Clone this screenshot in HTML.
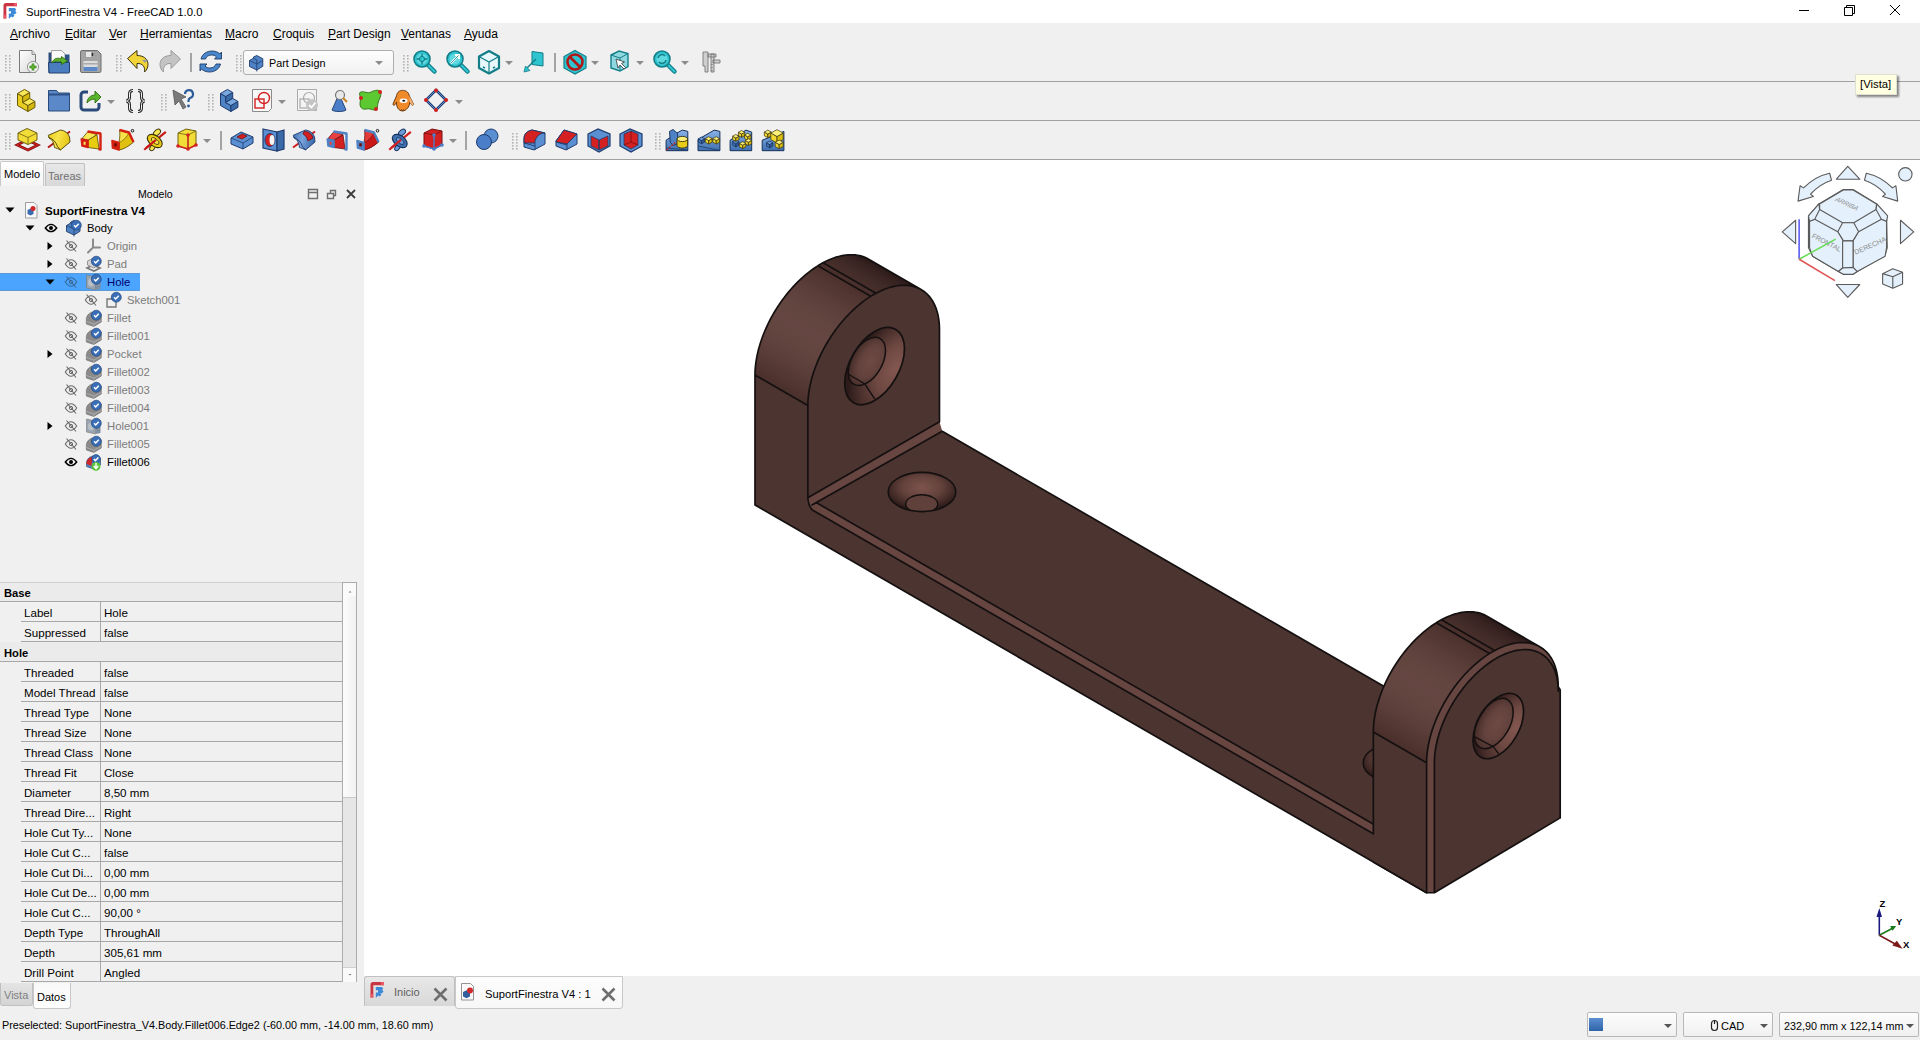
<!DOCTYPE html>
<html><head><meta charset="utf-8"><style>
html,body{margin:0;padding:0;}
body{width:1920px;height:1040px;overflow:hidden;position:relative;background:#f0f0f0;font-family:"Liberation Sans", sans-serif;}
.t{position:absolute;white-space:nowrap;line-height:1;}
svg{overflow:visible}
</style></head><body>
<div style="position:absolute;left:0px;top:0px;width:1920px;height:23px;background:#fff"></div>
<div class="t" style="left:26px;top:6.73px;font-size:11.3px;color:#000;font-weight:normal;">SuportFinestra V4 - FreeCAD 1.0.0</div>
<svg style="position:absolute;left:1790px;top:0" width="130" height="23">
<path d="M9 10.5h10" stroke="#000" stroke-width="1"/>
<path d="M54.5 7.5h8v8h-8z M56.5 7.5v-2h8v8h-2" stroke="#000" fill="none" stroke-width="1"/>
<path d="M100 5l10 10M110 5l-10 10" stroke="#000" stroke-width="1"/>
</svg>
<div class="t" style="left:10px;top:28px;font-size:12px"><u>A</u>rchivo</div>
<div class="t" style="left:65px;top:28px;font-size:12px"><u>E</u>ditar</div>
<div class="t" style="left:109px;top:28px;font-size:12px"><u>V</u>er</div>
<div class="t" style="left:140px;top:28px;font-size:12px"><u>H</u>erramientas</div>
<div class="t" style="left:225px;top:28px;font-size:12px"><u>M</u>acro</div>
<div class="t" style="left:273px;top:28px;font-size:12px"><u>C</u>roquis</div>
<div class="t" style="left:328px;top:28px;font-size:12px"><u>P</u>art Design</div>
<div class="t" style="left:401px;top:28px;font-size:12px"><u>V</u>entanas</div>
<div class="t" style="left:464px;top:28px;font-size:12px"><u>A</u>yuda</div>
<div style="position:absolute;left:0px;top:81px;width:1920px;height:1px;background:#a0a0a0"></div>
<div style="position:absolute;left:0px;top:120px;width:1920px;height:1px;background:#a0a0a0"></div>
<div style="position:absolute;left:0px;top:159px;width:1920px;height:1px;background:#a0a0a0"></div>
<div style="position:absolute;left:1855px;top:74px;width:42px;height:21px;background:#ffffe1;border:1px solid #e0e0d0;box-sizing:border-box;box-shadow:2px 2px 2px rgba(0,0,0,0.45)"></div>
<div class="t" style="left:1860px;top:79.43px;font-size:11.3px;color:#000;font-weight:normal;">[Vista]</div>
<div style="position:absolute;left:364px;top:160px;width:1556px;height:816px;background:#fff"></div>
<div style="position:absolute;left:0px;top:161px;width:44px;height:25px;background:linear-gradient(#fff,#f4f4f4);border:1px solid #c8c8c8;border-bottom:none;border-radius:2px 2px 0 0;box-sizing:border-box"></div>
<div style="position:absolute;left:45px;top:163px;width:40px;height:23px;background:linear-gradient(#e8e8e8,#d8d8d8);border:1px solid #c0c0c0;border-bottom:none;border-radius:2px 2px 0 0;box-sizing:border-box"></div>
<div class="t" style="left:4px;top:168.69px;font-size:11px;color:#000;font-weight:normal;">Modelo</div>
<div class="t" style="left:48px;top:170.69px;font-size:11px;color:#707070;font-weight:normal;">Tareas</div>
<div class="t" style="left:138px;top:189.03px;font-size:10.6px;color:#000;font-weight:normal;">Modelo</div>
<svg style="position:absolute;left:0;top:0" width="800" height="160">
<g transform="translate(5,55)"><rect x="0" y="0" width="1.6" height="1.6" fill="#b4b4b4"/><rect x="4" y="0" width="1.6" height="1.6" fill="#b4b4b4"/><rect x="0" y="3" width="1.6" height="1.6" fill="#b4b4b4"/><rect x="4" y="3" width="1.6" height="1.6" fill="#b4b4b4"/><rect x="0" y="6" width="1.6" height="1.6" fill="#b4b4b4"/><rect x="4" y="6" width="1.6" height="1.6" fill="#b4b4b4"/><rect x="0" y="9" width="1.6" height="1.6" fill="#b4b4b4"/><rect x="4" y="9" width="1.6" height="1.6" fill="#b4b4b4"/><rect x="0" y="12" width="1.6" height="1.6" fill="#b4b4b4"/><rect x="4" y="12" width="1.6" height="1.6" fill="#b4b4b4"/><rect x="0" y="15" width="1.6" height="1.6" fill="#b4b4b4"/><rect x="4" y="15" width="1.6" height="1.6" fill="#b4b4b4"/></g>
<g transform="translate(19,50)"><defs><linearGradient id="pg" x1="0" y1="0" x2="1" y2="1"><stop offset="0" stop-color="#fff"/><stop offset="1" stop-color="#d8d8d8"/></linearGradient></defs><path d="M0.5 0.5h12.5l3.5 4v18h-16z" fill="url(#pg)" stroke="#7a7a7a" stroke-width="1"/><path d="M13 0.5v4h3.5" fill="#ddd" stroke="#7a7a7a" stroke-width="0.8"/><circle cx="14" cy="17" r="5.6" fill="#f4f4f4" stroke="#8a8a8a" stroke-width="0.9"/><path d="M14 13.5v7M10.5 17h7" stroke="#2f7a10" stroke-width="2.6"/><path d="M14 14v6M11 17h6" stroke="#6cc23a" stroke-width="1.2"/></g>
<g transform="translate(48,50)"><path d="M0.5 2.5h3v20h-3z" fill="#2a4a7a"/><path d="M3.5 0.5h10l3.5 3.5v8h-13.5z" fill="#fafafa" stroke="#8a8a8a" stroke-width="0.8"/><path d="M0.5 12.5h21v9.5a1 1 0 0 1-1 1h-19.5z" fill="#4a7cc0" stroke="#22406e" stroke-width="1"/><path d="M17 4.5h4.5v8h-4.5z" fill="#2e5288"/><path d="M4 13c1-4 5-6 9-4l0.5-2.5 6 4.5-6 3.5v-2.5c-3-1.5-6-1-9.5 1z" fill="#5ab52a" stroke="#2a6a10" stroke-width="0.9"/></g>
<g transform="translate(80,50)"><path d="M0.5 2a1.5 1.5 0 0 1 1.5-1.5h15.5l3.5 3.5v17a1.5 1.5 0 0 1-1.5 1.5h-17.5a1.5 1.5 0 0 1-1.5-1.5z" fill="#a4a4a4" stroke="#707070" stroke-width="1"/><rect x="5.5" y="1.5" width="9" height="6" fill="#e8e8e8" stroke="#888" stroke-width="0.6"/><rect x="11.5" y="2.5" width="2" height="4" fill="#333"/><rect x="3.5" y="11" width="14" height="10" fill="#dcdcdc"/><rect x="3.5" y="17" width="14" height="4" fill="#5a88c8"/><rect x="3.5" y="13" width="14" height="1.5" fill="#aaa"/></g>
<g transform="translate(116,55)"><rect x="0" y="0" width="1.6" height="1.6" fill="#b4b4b4"/><rect x="4" y="0" width="1.6" height="1.6" fill="#b4b4b4"/><rect x="0" y="3" width="1.6" height="1.6" fill="#b4b4b4"/><rect x="4" y="3" width="1.6" height="1.6" fill="#b4b4b4"/><rect x="0" y="6" width="1.6" height="1.6" fill="#b4b4b4"/><rect x="4" y="6" width="1.6" height="1.6" fill="#b4b4b4"/><rect x="0" y="9" width="1.6" height="1.6" fill="#b4b4b4"/><rect x="4" y="9" width="1.6" height="1.6" fill="#b4b4b4"/><rect x="0" y="12" width="1.6" height="1.6" fill="#b4b4b4"/><rect x="4" y="12" width="1.6" height="1.6" fill="#b4b4b4"/><rect x="0" y="15" width="1.6" height="1.6" fill="#b4b4b4"/><rect x="4" y="15" width="1.6" height="1.6" fill="#b4b4b4"/></g>
<g transform="translate(127,50)"><path d="M0.5 8.5l9.5-8v5c6 0 11 3 11 9 0 3-1.5 6-3.5 7.5 1-5-2-9-7.5-8.5v5z" fill="#f0d438" stroke="#3a3410" stroke-width="1" stroke-linejoin="round"/><path d="M15 10l6-0.5-3 3.5z" fill="#999"/></g>
<g transform="translate(159,50)"><path d="M21.5 9l-9.5-8.5v5c-6 0-11 3-11 9 0 3 1.5 6 3.5 7.5-1-5 2-9 7.5-8.5v5z" fill="#c4c4c4" stroke="#9a9a9a" stroke-width="1" stroke-linejoin="round"/></g>
<g transform="translate(190,53)"><rect x="0" y="0" width="2" height="19" fill="#a4a4a4"/></g>
<g transform="translate(200,50)"><path d="M1 9c1-5 6-8 11-8 3 0 6 1 8 3l1.5-2v7h-7l2-2c-1.5-1.5-3-2-5-2-3 0-5 1.5-6 4z" fill="#4a86cc" stroke="#1e3a66" stroke-width="0.9"/><path d="M20.5 14c-1 5-6 8-11 8-3 0-6-1-8-3l-1.5 2v-7h7l-2 2c1.5 1.5 3 2 5 2 3 0 5-1.5 6-4z" fill="#4a86cc" stroke="#1e3a66" stroke-width="0.9"/></g>
<g transform="translate(236,55)"><rect x="0" y="0" width="1.6" height="1.6" fill="#b4b4b4"/><rect x="4" y="0" width="1.6" height="1.6" fill="#b4b4b4"/><rect x="0" y="3" width="1.6" height="1.6" fill="#b4b4b4"/><rect x="4" y="3" width="1.6" height="1.6" fill="#b4b4b4"/><rect x="0" y="6" width="1.6" height="1.6" fill="#b4b4b4"/><rect x="4" y="6" width="1.6" height="1.6" fill="#b4b4b4"/><rect x="0" y="9" width="1.6" height="1.6" fill="#b4b4b4"/><rect x="4" y="9" width="1.6" height="1.6" fill="#b4b4b4"/><rect x="0" y="12" width="1.6" height="1.6" fill="#b4b4b4"/><rect x="4" y="12" width="1.6" height="1.6" fill="#b4b4b4"/><rect x="0" y="15" width="1.6" height="1.6" fill="#b4b4b4"/><rect x="4" y="15" width="1.6" height="1.6" fill="#b4b4b4"/></g>
<g transform="translate(403,55)"><rect x="0" y="0" width="1.6" height="1.6" fill="#b4b4b4"/><rect x="4" y="0" width="1.6" height="1.6" fill="#b4b4b4"/><rect x="0" y="3" width="1.6" height="1.6" fill="#b4b4b4"/><rect x="4" y="3" width="1.6" height="1.6" fill="#b4b4b4"/><rect x="0" y="6" width="1.6" height="1.6" fill="#b4b4b4"/><rect x="4" y="6" width="1.6" height="1.6" fill="#b4b4b4"/><rect x="0" y="9" width="1.6" height="1.6" fill="#b4b4b4"/><rect x="4" y="9" width="1.6" height="1.6" fill="#b4b4b4"/><rect x="0" y="12" width="1.6" height="1.6" fill="#b4b4b4"/><rect x="4" y="12" width="1.6" height="1.6" fill="#b4b4b4"/><rect x="0" y="15" width="1.6" height="1.6" fill="#b4b4b4"/><rect x="4" y="15" width="1.6" height="1.6" fill="#b4b4b4"/></g>
<g transform="translate(413,50)"><path d="M14 14l7.5 7.5" stroke="#137e88" stroke-width="4.5" stroke-linecap="round"/><path d="M14 14l7.5 7.5" stroke="#2ec4d0" stroke-width="2.2" stroke-linecap="round"/><circle cx="9" cy="9" r="8" fill="#2ec4d0" stroke="#137e88" stroke-width="1.6"/><circle cx="9" cy="9" r="5.5" fill="#5fd8e0"/><path d="M9 3.5v11M3.5 9h11" stroke="#137e88" stroke-width="1.4"/><circle cx="9" cy="9" r="2.6" fill="#2ec4d0" stroke="#137e88" stroke-width="1"/></g>
<g transform="translate(446,50)"><path d="M14 14l7.5 7.5" stroke="#137e88" stroke-width="4.5" stroke-linecap="round"/><path d="M14 14l7.5 7.5" stroke="#2ec4d0" stroke-width="2.2" stroke-linecap="round"/><circle cx="9" cy="9" r="8" fill="#2ec4d0" stroke="#137e88" stroke-width="1.6"/><circle cx="9" cy="9" r="5.5" fill="#5fd8e0"/><path d="M4.5 13.5l8-8M9 5h4v4" stroke="#fff" stroke-width="2" fill="none"/><path d="M4.5 13.5l8-8" stroke="#137e88" stroke-width="0.8"/></g>
<g transform="translate(477,50)"><path d="M12 1l10 5.5v11.5l-10 5.5-10-5.5v-11.5z" fill="#e8f8fa" stroke="#137e88" stroke-width="2.2" stroke-linejoin="round"/><path d="M2 6.5l10 5.5 10-5.5M12 12v11" stroke="#137e88" stroke-width="1.2" fill="none"/><path d="M6 17l2 1M16 18l2-1" stroke="#137e88" stroke-width="1.5"/></g>
<g transform="translate(505,61)"><path d="M0 0h8l-4 4z" fill="#8c8c8c"/></g>
<g transform="translate(523,50)"><path d="M9 1.5l11 1.5v13l-11-1.5z" fill="#2ec4d0" stroke="#137e88" stroke-width="1"/><path d="M13 9l-10 10" stroke="#137e88" stroke-width="1.4"/><path d="M1 22l1.5-6 4.5 4.5z" fill="#2ec4d0" stroke="#137e88" stroke-width="0.8"/></g>
<g transform="translate(554,53)"><rect x="0" y="0" width="2" height="19" fill="#a4a4a4"/></g>
<g transform="translate(563,50)"><path d="M12 0.5l11 6v11.5l-11 6-11-6v-11.5z" fill="#2ec4d0" stroke="#137e88" stroke-width="1.2"/><circle cx="12" cy="12" r="7.5" fill="none" stroke="#b01818" stroke-width="2.6"/><path d="M7 7l10 10" stroke="#b01818" stroke-width="2.6"/></g>
<g transform="translate(591,61)"><path d="M0 0h8l-4 4z" fill="#8c8c8c"/></g>
<g transform="translate(608,50)"><path d="M3 5l8-4 9 2.5v13l-8 4.5-9-3z" fill="#8fd8e0" stroke="#137e88" stroke-width="1.4"/><path d="M3 5l9 3 8-4.5M12 8v13" stroke="#137e88" stroke-width="1" fill="none"/><path d="M8 9l2 9 2-3 4 4 1.5-1.5-4-4 3-1.5z" fill="#fff" stroke="#333" stroke-width="0.8"/></g>
<g transform="translate(636,61)"><path d="M0 0h8l-4 4z" fill="#8c8c8c"/></g>
<g transform="translate(653,50)"><path d="M14 14l7.5 7.5" stroke="#137e88" stroke-width="4.5" stroke-linecap="round"/><path d="M14 14l7.5 7.5" stroke="#2ec4d0" stroke-width="2.2" stroke-linecap="round"/><circle cx="9" cy="9" r="8" fill="#2ec4d0" stroke="#137e88" stroke-width="1.6"/><circle cx="9" cy="9" r="5.5" fill="#5fd8e0"/><path d="M5 8a4 4 0 0 1 7-2M13 10a4 4 0 0 1-7 2" stroke="#137e88" stroke-width="1.6" fill="none"/></g>
<g transform="translate(681,61)"><path d="M0 0h8l-4 4z" fill="#8c8c8c"/></g>
<g transform="translate(699,50)"><path d="M4 2h5v20h-3v-6h-2zM9 4h8v3h-8zM14 10h7v3h-7zM12 4h3v18h-3z" fill="#cfcfcf" stroke="#777" stroke-width="0.9"/><path d="M13 14v1M13 17v1M13 20v1" stroke="#555" stroke-width="0.8"/></g>
<g transform="translate(5,94)"><rect x="0" y="0" width="1.6" height="1.6" fill="#b4b4b4"/><rect x="4" y="0" width="1.6" height="1.6" fill="#b4b4b4"/><rect x="0" y="3" width="1.6" height="1.6" fill="#b4b4b4"/><rect x="4" y="3" width="1.6" height="1.6" fill="#b4b4b4"/><rect x="0" y="6" width="1.6" height="1.6" fill="#b4b4b4"/><rect x="4" y="6" width="1.6" height="1.6" fill="#b4b4b4"/><rect x="0" y="9" width="1.6" height="1.6" fill="#b4b4b4"/><rect x="4" y="9" width="1.6" height="1.6" fill="#b4b4b4"/><rect x="0" y="12" width="1.6" height="1.6" fill="#b4b4b4"/><rect x="4" y="12" width="1.6" height="1.6" fill="#b4b4b4"/><rect x="0" y="15" width="1.6" height="1.6" fill="#b4b4b4"/><rect x="4" y="15" width="1.6" height="1.6" fill="#b4b4b4"/></g>
<g transform="translate(16,89)"><path d="M1.50 16.50 L11.89 22.50 L11.89 16.50 L6.70 13.50 L6.70 7.50 L1.50 4.50Z" fill="#e8cc20" stroke="#6a5a08" stroke-width="1" stroke-linejoin="round"/><path d="M11.89 22.50 L18.91 18.45 L18.91 12.45 L11.89 16.50Z" fill="#d4b810" stroke="#6a5a08" stroke-width="1" stroke-linejoin="round"/><path d="M6.70 13.50 L13.71 9.45 L13.71 3.45 L6.70 7.50Z" fill="#d4b810" stroke="#6a5a08" stroke-width="1" stroke-linejoin="round"/><path d="M6.70 13.50 L13.71 9.45 L18.91 12.45 L11.89 16.50Z" fill="#f8e858" stroke="#6a5a08" stroke-width="1" stroke-linejoin="round"/><path d="M1.50 4.50 L8.51 0.45 L13.71 3.45 L6.70 7.50Z" fill="#f8e858" stroke="#6a5a08" stroke-width="1" stroke-linejoin="round"/></g>
<g transform="translate(48,89)"><path d="M0.5 1.5h8l2 2.5h11v18h-21z" fill="#5a88c8" stroke="#2a4a7a" stroke-width="1"/><path d="M0.5 4.5h21v2h-21z" fill="#2e5288"/></g>
<g transform="translate(80,89)"><path d="M8 3h-4a3 3 0 0 0-3 3v12a3 3 0 0 0 3 3h12a3 3 0 0 0 3-3v-4" fill="none" stroke="#2a4a7a" stroke-width="3"/><path d="M7 14c0-5 4-8 8-8v-4l6 6-6 6v-4c-3 0-6 1.5-8 4z" fill="#5ab52a" stroke="#2a6a10" stroke-width="0.9"/></g>
<g transform="translate(107,100)"><path d="M0 0h8l-4 4z" fill="#8c8c8c"/></g>
<g transform="translate(125,89)"><path d="M8 1.5c-2.5 0-3.5 1-3.5 3.5v3.5c0 2-1 3-3 3.5 2 .5 3 1.5 3 3.5v3.5c0 2.5 1 3.5 3.5 3.5M13 1.5c2.5 0 3.5 1 3.5 3.5v3.5c0 2 1 3 3 3.5-2 .5-3 1.5-3 3.5v3.5c0 2.5-1 3.5-3.5 3.5" fill="none" stroke="#2a2a2a" stroke-width="3"/><path d="M8 1.5c-2.5 0-3.5 1-3.5 3.5v3.5c0 2-1 3-3 3.5 2 .5 3 1.5 3 3.5v3.5c0 2.5 1 3.5 3.5 3.5M13 1.5c2.5 0 3.5 1 3.5 3.5v3.5c0 2 1 3 3 3.5-2 .5-3 1.5-3 3.5v3.5c0 2.5-1 3.5-3.5 3.5" fill="none" stroke="#f4f4f4" stroke-width="1"/></g>
<g transform="translate(161,94)"><rect x="0" y="0" width="1.6" height="1.6" fill="#b4b4b4"/><rect x="4" y="0" width="1.6" height="1.6" fill="#b4b4b4"/><rect x="0" y="3" width="1.6" height="1.6" fill="#b4b4b4"/><rect x="4" y="3" width="1.6" height="1.6" fill="#b4b4b4"/><rect x="0" y="6" width="1.6" height="1.6" fill="#b4b4b4"/><rect x="4" y="6" width="1.6" height="1.6" fill="#b4b4b4"/><rect x="0" y="9" width="1.6" height="1.6" fill="#b4b4b4"/><rect x="4" y="9" width="1.6" height="1.6" fill="#b4b4b4"/><rect x="0" y="12" width="1.6" height="1.6" fill="#b4b4b4"/><rect x="4" y="12" width="1.6" height="1.6" fill="#b4b4b4"/><rect x="0" y="15" width="1.6" height="1.6" fill="#b4b4b4"/><rect x="4" y="15" width="1.6" height="1.6" fill="#b4b4b4"/></g>
<g transform="translate(172,89)"><path d="M1 1l13 7-5 2 5 8-3 2-4-8-4 4z" fill="#7a7a7a" stroke="#555" stroke-width="0.8"/><path d="M13 5a4 4 0 1 1 5 4c-1 0.5-1.5 1.5-1.5 3v1" fill="none" stroke="#2a5a9a" stroke-width="2.2"/><circle cx="16.5" cy="17" r="1.4" fill="#2a5a9a"/></g>
<g transform="translate(208,94)"><rect x="0" y="0" width="1.6" height="1.6" fill="#b4b4b4"/><rect x="4" y="0" width="1.6" height="1.6" fill="#b4b4b4"/><rect x="0" y="3" width="1.6" height="1.6" fill="#b4b4b4"/><rect x="4" y="3" width="1.6" height="1.6" fill="#b4b4b4"/><rect x="0" y="6" width="1.6" height="1.6" fill="#b4b4b4"/><rect x="4" y="6" width="1.6" height="1.6" fill="#b4b4b4"/><rect x="0" y="9" width="1.6" height="1.6" fill="#b4b4b4"/><rect x="4" y="9" width="1.6" height="1.6" fill="#b4b4b4"/><rect x="0" y="12" width="1.6" height="1.6" fill="#b4b4b4"/><rect x="4" y="12" width="1.6" height="1.6" fill="#b4b4b4"/><rect x="0" y="15" width="1.6" height="1.6" fill="#b4b4b4"/><rect x="4" y="15" width="1.6" height="1.6" fill="#b4b4b4"/></g>
<g transform="translate(219,89)"><path d="M1.50 16.50 L11.89 22.50 L11.89 16.50 L6.70 13.50 L6.70 7.50 L1.50 4.50Z" fill="#4f82c4" stroke="#1e3c6e" stroke-width="1" stroke-linejoin="round"/><path d="M11.89 22.50 L18.91 18.45 L18.91 12.45 L11.89 16.50Z" fill="#3a6aa8" stroke="#1e3c6e" stroke-width="1" stroke-linejoin="round"/><path d="M6.70 13.50 L13.71 9.45 L13.71 3.45 L6.70 7.50Z" fill="#3a6aa8" stroke="#1e3c6e" stroke-width="1" stroke-linejoin="round"/><path d="M6.70 13.50 L13.71 9.45 L18.91 12.45 L11.89 16.50Z" fill="#7aa8e0" stroke="#1e3c6e" stroke-width="1" stroke-linejoin="round"/><path d="M1.50 4.50 L8.51 0.45 L13.71 3.45 L6.70 7.50Z" fill="#7aa8e0" stroke="#1e3c6e" stroke-width="1" stroke-linejoin="round"/></g>
<g transform="translate(252,89)"><path d="M0.5 0.5h19v19l-3 3h-16z" fill="#f8f8f8" stroke="#8a8a8a" stroke-width="1"/><rect x="3" y="10" width="9" height="9" fill="none" stroke="#d42020" stroke-width="1.4"/><circle cx="12" cy="9" r="5.5" fill="none" stroke="#d42020" stroke-width="1.4"/></g>
<g transform="translate(278,100)"><path d="M0 0h8l-4 4z" fill="#8c8c8c"/></g>
<g transform="translate(297,89)"><path d="M0.5 0.5h19v21h-19z" fill="#f4f4f4" stroke="#aaa" stroke-width="1"/><rect x="3" y="10" width="9" height="9" fill="none" stroke="#aaa" stroke-width="1.2"/><circle cx="12" cy="9" r="5.5" fill="none" stroke="#aaa" stroke-width="1.2"/><circle cx="15" cy="16" r="6" fill="#c4c4c4"/><path d="M12 16l2.5 2.5 4-5" stroke="#fff" stroke-width="1.8" fill="none"/></g>
<g transform="translate(331,89)"><path d="M8 5l-7 16c2 2 12 2 14 0z" fill="#4a7ec8" stroke="#1e3c6e" stroke-width="0.9"/><circle cx="9" cy="6" r="4.5" fill="#e8e8e8" stroke="#777" stroke-width="1.2"/><path d="M12 9l4 4" stroke="#c88020" stroke-width="2"/></g>
<g transform="translate(359,89)"><path d="M2 3c4-1 6 2 10 0s9-3 10 1c0 4-2 6-3 10s0 7-3 7c-4 0-5-2-9-1s-6-2-6-5 1-5 0-8 0-4 1-4z" fill="#5cc832" stroke="#2a7010" stroke-width="0.9"/><circle cx="21" cy="3" r="2" fill="#d02020"/><circle cx="2" cy="9" r="2" fill="#d02020"/><circle cx="17" cy="20" r="2" fill="#d02020"/></g>
<g transform="translate(390,89)"><path d="M6.6 6.8C7 3 10 1.2 12.5 1.4C15 1.2 18.5 2.5 19.3 6.8L23.5 15.2C23 17 21.5 16.5 19.8 13.2C19.5 18 16 22 12.5 22C9 22 6 18 6.6 13.2C5 16.5 3.5 17 2.9 15.2Z" fill="#f08a28" stroke="#5a2a06" stroke-width="0.9" stroke-linejoin="round"/><path d="M19.3 6.8L23.5 15.2C23 17 21.5 16.5 19.8 13.2Z" fill="#f4b070"/><ellipse cx="13.5" cy="11.7" rx="4" ry="2.2" fill="#fff"/><ellipse cx="13.8" cy="11.7" rx="1.6" ry="1" fill="#222"/><path d="M11 20.5l1.5 1 1.5-1" stroke="#5a2a06" stroke-width="0.8" fill="none"/></g>
<g transform="translate(424,89)"><path d="M12 1l10 10-10 10-10-10z" fill="none" stroke="#1e3c6e" stroke-width="2.6"/><path d="M12 1l10 10-10 10-10-10z" fill="none" stroke="#5a8ed0" stroke-width="1"/><circle cx="12" cy="1.5" r="2" fill="#d02020"/><circle cx="22" cy="11" r="2" fill="#d02020"/><circle cx="12" cy="21" r="2" fill="#d02020"/><circle cx="2" cy="11" r="2" fill="#d02020"/></g>
<g transform="translate(455,100)"><path d="M0 0h8l-4 4z" fill="#8c8c8c"/></g>
<g transform="translate(5,133)"><rect x="0" y="0" width="1.6" height="1.6" fill="#b4b4b4"/><rect x="4" y="0" width="1.6" height="1.6" fill="#b4b4b4"/><rect x="0" y="3" width="1.6" height="1.6" fill="#b4b4b4"/><rect x="4" y="3" width="1.6" height="1.6" fill="#b4b4b4"/><rect x="0" y="6" width="1.6" height="1.6" fill="#b4b4b4"/><rect x="4" y="6" width="1.6" height="1.6" fill="#b4b4b4"/><rect x="0" y="9" width="1.6" height="1.6" fill="#b4b4b4"/><rect x="4" y="9" width="1.6" height="1.6" fill="#b4b4b4"/><rect x="0" y="12" width="1.6" height="1.6" fill="#b4b4b4"/><rect x="4" y="12" width="1.6" height="1.6" fill="#b4b4b4"/><rect x="0" y="15" width="1.6" height="1.6" fill="#b4b4b4"/><rect x="4" y="15" width="1.6" height="1.6" fill="#b4b4b4"/></g>
<g transform="translate(16,128)"><path d="M1 17l10-5 11 5-10 5z" fill="none" stroke="#7a1010" stroke-width="2.6"/><path d="M1 17l10-5 11 5-10 5z" fill="none" stroke="#d42020" stroke-width="1.2"/><path d="M2 5l9-4.5 10 4.5v7l-9 4.5-10-4.5z" fill="#f2dc38" stroke="#6e6010" stroke-width="1"/><path d="M2 5l10 4.5 9-4.5M12 9.5v7" stroke="#6e6010" stroke-width="0.8" fill="none"/></g>
<g transform="translate(48,128)"><defs><linearGradient id="rve6c818" x1="0" y1="0" x2="1" y2="0.3"><stop offset="0" stop-color="#e6c818"/><stop offset="0.5" stop-color="#f8e44a"/><stop offset="1" stop-color="#e6c818"/></linearGradient></defs><path d="M0 19.5L22 3.5" stroke="#b01818" stroke-width="2"/><path d="M0.3 7.3L12.5 2C17 2.5 20 5 21.5 9L22 14L12.5 22C11 21 8 20 6.5 19.5C6 15 4 11 1 10Z" fill="url(#rve6c818)" stroke="#4a4008" stroke-width="0.9" stroke-linejoin="round"/><path d="M1 9.5C5 11 8 14 9.5 18.5L12.5 22" fill="none" stroke="#4a4008" stroke-width="0.9"/><path d="M16 18.5L22 13.5" stroke="#b01818" stroke-width="0"/></g>
<g transform="translate(80,128)"><path d="M2 10.5L8 3.5L17 6.75L8 12.25Z" fill="#f8e858" stroke="#5a4a08" stroke-width="0.8"/><path d="M8 12.25L17 6.75L19 21L8 19.5Z" fill="#e8cc10" stroke="#5a4a08" stroke-width="0.8"/><path d="M7.5 3.5L20.5 5.5V21.5L18.5 21" fill="none" stroke="#d42010" stroke-width="2.4" stroke-linejoin="round"/><path d="M1.25 11L8 12.25V19.5L2 18Z" fill="#d42010" stroke="#d42010" stroke-width="1.6" stroke-linejoin="round"/><rect x="3.6" y="13.8" width="2" height="3" fill="#f8e858"/></g>
<g transform="translate(112,128)"><path d="M7 14.5C8 9 8 5 7.5 2L17 4.5C18 9 20 12 21.5 14C17 18 12 21 7 22Z" fill="#f6e248" stroke="#5a4a08" stroke-width="0.8" stroke-linejoin="round"/><path d="M17 4.5C18 9 20 12 21.5 14C17 18 12 21 7 22L7.5 14.5C12 12 15 9 17 4.5Z" fill="#e0c010" stroke="#5a4a08" stroke-width="0.6"/><path d="M7.5 2L17 4.5L21.5 14" fill="none" stroke="#d42010" stroke-width="2.4" stroke-linejoin="round"/><path d="M0 12.5L7 14.5V22L0.5 20Z" fill="#d42010" stroke="#d42010" stroke-width="1.6" stroke-linejoin="round"/><rect x="2.3" y="15.3" width="2.5" height="3" fill="#6a0c0c"/><circle cx="20.5" cy="2.75" r="1.3" fill="none" stroke="#111" stroke-width="1"/></g>
<g transform="translate(144,128)"><path d="M0.2 21.75L21.8 3.8" stroke="#c81818" stroke-width="2.2"/><ellipse cx="13" cy="4.5" rx="4" ry="2.6" transform="rotate(-40 13 4.5)" fill="#f6e450" stroke="#3a3208" stroke-width="1"/><ellipse cx="8.5" cy="19.5" rx="3.6" ry="2.2" transform="rotate(-55 8.5 19.5)" fill="#f6e450" stroke="#3a3208" stroke-width="1"/><ellipse cx="10.8" cy="13" rx="8.5" ry="5.2" transform="rotate(38 10.8 13)" fill="#e8cc18" stroke="#3a3208" stroke-width="1.1"/><ellipse cx="11.2" cy="13" rx="4.6" ry="2.2" transform="rotate(38 11.2 13)" fill="#f6e450" stroke="#3a3208" stroke-width="0.8"/><path d="M2 20L12 11.8" stroke="#c81818" stroke-width="2.2"/></g>
<g transform="translate(176,128)"><path d="M2 5l8-4 10 2v14l-8 4-10-3z" fill="#f2dc38" stroke="#6e6010" stroke-width="1"/><path d="M2 5l10 2 8-4M12 7v14" stroke="#6e6010" stroke-width="0.8" fill="none"/><path d="M2 18l10 3 8-4M12 7v14" stroke="#d42020" stroke-width="1.4" fill="none"/><circle cx="12" cy="7" r="1.8" fill="#d42020"/><circle cx="2" cy="18" r="1.8" fill="#d42020"/><circle cx="12" cy="21" r="1.8" fill="#d42020"/><circle cx="20" cy="17" r="1.8" fill="#d42020"/></g>
<g transform="translate(203,139)"><path d="M0 0h8l-4 4z" fill="#8c8c8c"/></g>
<g transform="translate(220,131)"><rect x="0" y="0" width="2" height="19" fill="#a4a4a4"/></g>
<g transform="translate(230,128)"><path d="M1 10l10-6 12 5v6l-10 6-12-5z" fill="#5a8fd2" stroke="#1e3c6e" stroke-width="1"/><path d="M1 10l12 5 10-6M13 15v6" stroke="#1e3c6e" stroke-width="0.8" fill="none"/><path d="M7 9l5-3 5 2-5 3z" fill="#d42020" stroke="#7a1010" stroke-width="0.8"/></g>
<g transform="translate(262,128)"><path d="M1 1l14 3v19l-14-3z" fill="#5a8fd2" stroke="#1e3c6e" stroke-width="1.2"/><path d="M15 4l7-2v19l-7 2z" fill="#3a6aa8" stroke="#1e3c6e" stroke-width="1.2"/><ellipse cx="8" cy="12" rx="5" ry="6.5" fill="#d42020" stroke="#1e3c6e" stroke-width="0.9"/><ellipse cx="10" cy="12" rx="2.5" ry="5" fill="#f4f4f4"/></g>
<g transform="translate(293,128)"><defs><linearGradient id="rv3f6fb0" x1="0" y1="0" x2="1" y2="0.3"><stop offset="0" stop-color="#3f6fb0"/><stop offset="0.5" stop-color="#7aa4dc"/><stop offset="1" stop-color="#3f6fb0"/></linearGradient></defs><path d="M0 19.5L22 3.5" stroke="#d02020" stroke-width="2"/><path d="M0.3 7.3L12.5 2C17 2.5 20 5 21.5 9L22 14L12.5 22C11 21 8 20 6.5 19.5C6 15 4 11 1 10Z" fill="url(#rv3f6fb0)" stroke="#1e3c6e" stroke-width="0.9" stroke-linejoin="round"/><path d="M1 9.5C5 11 8 14 9.5 18.5L12.5 22" fill="none" stroke="#1e3c6e" stroke-width="0.9"/><path d="M16 18.5L22 13.5" stroke="#d02020" stroke-width="0"/><path d="M11 3.5C15 3 19 6 20 10L15 13C14 9 12 7 10 6Z" fill="#d42020" stroke="#6a1010" stroke-width="0.8"/></g>
<g transform="translate(326,128)"><path d="M2 10.5L8 3.5L17 6.75L8 12.25Z" fill="#e84040" stroke="#6a1010" stroke-width="0.8"/><path d="M8 12.25L17 6.75L19 21L8 19.5Z" fill="#d42020" stroke="#6a1010" stroke-width="0.8"/><path d="M7.5 3.5L20.5 5.5V21.5L18.5 21" fill="none" stroke="#4f82c4" stroke-width="2.4" stroke-linejoin="round"/><path d="M1.25 11L8 12.25V19.5L2 18Z" fill="#4f82c4" stroke="#4f82c4" stroke-width="1.6" stroke-linejoin="round"/><rect x="3.6" y="13.8" width="2" height="3" fill="#e84040"/></g>
<g transform="translate(357,128)"><path d="M7 14.5C8 9 8 5 7.5 2L17 4.5C18 9 20 12 21.5 14C17 18 12 21 7 22Z" fill="#e43a3a" stroke="#6a1010" stroke-width="0.8" stroke-linejoin="round"/><path d="M17 4.5C18 9 20 12 21.5 14C17 18 12 21 7 22L7.5 14.5C12 12 15 9 17 4.5Z" fill="#c81818" stroke="#6a1010" stroke-width="0.6"/><path d="M7.5 2L17 4.5L21.5 14" fill="none" stroke="#4f82c4" stroke-width="2.4" stroke-linejoin="round"/><path d="M0 12.5L7 14.5V22L0.5 20Z" fill="#4f82c4" stroke="#4f82c4" stroke-width="1.6" stroke-linejoin="round"/><rect x="2.3" y="15.3" width="2.5" height="3" fill="#6a0c0c"/><circle cx="20.5" cy="2.75" r="1.3" fill="none" stroke="#111" stroke-width="1"/></g>
<g transform="translate(389,128)"><path d="M0.2 21.75L21.8 3.8" stroke="#d02020" stroke-width="2.2"/><ellipse cx="13" cy="4.5" rx="4" ry="2.6" transform="rotate(-40 13 4.5)" fill="#6a9ad8" stroke="#15305a" stroke-width="1"/><ellipse cx="8.5" cy="19.5" rx="3.6" ry="2.2" transform="rotate(-55 8.5 19.5)" fill="#6a9ad8" stroke="#15305a" stroke-width="1"/><ellipse cx="10.8" cy="13" rx="8.5" ry="5.2" transform="rotate(38 10.8 13)" fill="#3f6fb0" stroke="#15305a" stroke-width="1.1"/><ellipse cx="11.2" cy="13" rx="4.6" ry="2.2" transform="rotate(38 11.2 13)" fill="#6a9ad8" stroke="#15305a" stroke-width="0.8"/><path d="M2 20L12 11.8" stroke="#d02020" stroke-width="2.2"/></g>
<g transform="translate(422,128)"><path d="M2 5l8-4 10 2v14l-8 4-10-3z" fill="#d42020" stroke="#7a1010" stroke-width="1"/><path d="M2 5l10 2 8-4" stroke="#7a1010" stroke-width="0.8" fill="none"/><path d="M2 18l10 3 8-4M12 7v14" stroke="#4a7ec8" stroke-width="1.4" fill="none"/><circle cx="12" cy="7" r="1.8" fill="#4a7ec8"/><circle cx="2" cy="18" r="1.8" fill="#4a7ec8"/><circle cx="12" cy="21" r="1.8" fill="#4a7ec8"/><circle cx="20" cy="17" r="1.8" fill="#4a7ec8"/></g>
<g transform="translate(449,139)"><path d="M0 0h8l-4 4z" fill="#8c8c8c"/></g>
<g transform="translate(465,131)"><rect x="0" y="0" width="2" height="19" fill="#a4a4a4"/></g>
<g transform="translate(476,128)"><circle cx="15" cy="8" r="7" fill="#5a8fd2" stroke="#1e3c6e" stroke-width="1"/><circle cx="8" cy="14" r="7.5" fill="#4a7ec8" stroke="#1e3c6e" stroke-width="1"/></g>
<g transform="translate(512,133)"><rect x="0" y="0" width="1.6" height="1.6" fill="#b4b4b4"/><rect x="4" y="0" width="1.6" height="1.6" fill="#b4b4b4"/><rect x="0" y="3" width="1.6" height="1.6" fill="#b4b4b4"/><rect x="4" y="3" width="1.6" height="1.6" fill="#b4b4b4"/><rect x="0" y="6" width="1.6" height="1.6" fill="#b4b4b4"/><rect x="4" y="6" width="1.6" height="1.6" fill="#b4b4b4"/><rect x="0" y="9" width="1.6" height="1.6" fill="#b4b4b4"/><rect x="4" y="9" width="1.6" height="1.6" fill="#b4b4b4"/><rect x="0" y="12" width="1.6" height="1.6" fill="#b4b4b4"/><rect x="4" y="12" width="1.6" height="1.6" fill="#b4b4b4"/><rect x="0" y="15" width="1.6" height="1.6" fill="#b4b4b4"/><rect x="4" y="15" width="1.6" height="1.6" fill="#b4b4b4"/></g>
<g transform="translate(523,128)"><path d="M1 11c0-6 4-8 8-9l13 3v11l-11 6-10-3z" fill="#5a8fd2" stroke="#1e3c6e" stroke-width="1"/><path d="M1 15v-4c0-6 4-8 8-9l13 3c-4 0-8 2-10 8v2z" fill="#d42020" stroke="#1e3c6e" stroke-width="0.9"/><path d="M12 15v7M1 15l11 3" stroke="#1e3c6e" stroke-width="0.9"/></g>
<g transform="translate(555,128)"><path d="M1 13l8-11 13 4v10l-11 6-10-4z" fill="#5a8fd2" stroke="#1e3c6e" stroke-width="1"/><path d="M1 14v-1l8-11 13 4-10 10z" fill="#d42020" stroke="#1e3c6e" stroke-width="0.9"/><path d="M12 16v6M1 14l11 3" stroke="#1e3c6e" stroke-width="0.9"/></g>
<g transform="translate(587,128)"><path d="M1 6l10-5 12 5v12l-11 6-11-6z" fill="#5a8fd2" stroke="#1e3c6e" stroke-width="1.2"/><path d="M4 8l8 4 9-4v10l-9 4-8-4z" fill="#d42020" stroke="#1e3c6e" stroke-width="0.8"/><path d="M12 12v10" stroke="#1e3c6e" stroke-width="1.4"/></g>
<g transform="translate(619,128)"><path d="M1 6l10-5 12 5v12l-11 6-11-6z" fill="#5a8fd2" stroke="#1e3c6e" stroke-width="1.2"/><path d="M5 6l7-3 7 3v11l-7 4-7-4z" fill="#d42020" stroke="#1e3c6e" stroke-width="0.8"/><path d="M5 17l7-3 7 3M12 3v11" stroke="#7a1010" stroke-width="0.8" fill="none"/></g>
<g transform="translate(655,133)"><rect x="0" y="0" width="1.6" height="1.6" fill="#b4b4b4"/><rect x="4" y="0" width="1.6" height="1.6" fill="#b4b4b4"/><rect x="0" y="3" width="1.6" height="1.6" fill="#b4b4b4"/><rect x="4" y="3" width="1.6" height="1.6" fill="#b4b4b4"/><rect x="0" y="6" width="1.6" height="1.6" fill="#b4b4b4"/><rect x="4" y="6" width="1.6" height="1.6" fill="#b4b4b4"/><rect x="0" y="9" width="1.6" height="1.6" fill="#b4b4b4"/><rect x="4" y="9" width="1.6" height="1.6" fill="#b4b4b4"/><rect x="0" y="12" width="1.6" height="1.6" fill="#b4b4b4"/><rect x="4" y="12" width="1.6" height="1.6" fill="#b4b4b4"/><rect x="0" y="15" width="1.6" height="1.6" fill="#b4b4b4"/><rect x="4" y="15" width="1.6" height="1.6" fill="#b4b4b4"/></g>
<g transform="translate(665,128)"><defs><linearGradient id="bw" x1="0" y1="0" x2="0" y2="1"><stop offset="0" stop-color="#8ab4e8"/><stop offset="1" stop-color="#3f6fb0"/></linearGradient></defs><path d="M1.1 22.7L22.8 22.7L22.8 3.4L17.3 2.1L12 5L1.1 12.2Z" fill="url(#bw)" stroke="#15305a" stroke-width="1" stroke-linejoin="round"/><path d="M1.1 20L22.8 22" stroke="#15305a" stroke-width="0.7"/><path d="M4.5 3.4L8 1.5L12.6 5.4V15.6L8 17.5L5.2 14.2Z" fill="#4f82c4" stroke="#15305a" stroke-width="0.9"/><path d="M1.5 22L11 14" stroke="#d02020" stroke-width="1.2" stroke-dasharray="2 1.2"/><path d="M12 11V17.5A5.3 2.6 0 0 0 22.6 17.5V11Z" fill="#e8cc18" stroke="#3a3208" stroke-width="0.9"/><ellipse cx="17.3" cy="11" rx="5.3" ry="2.6" fill="#fff07a" stroke="#3a3208" stroke-width="0.9"/></g>
<g transform="translate(698,128)"><defs><linearGradient id="bw" x1="0" y1="0" x2="0" y2="1"><stop offset="0" stop-color="#8ab4e8"/><stop offset="1" stop-color="#3f6fb0"/></linearGradient></defs><path d="M0 22.7L21.9 22.7L21.9 3.4L16.2 2.1L0 11.5Z" fill="url(#bw)" stroke="#15305a" stroke-width="1" stroke-linejoin="round"/><path d="M0 18L21.9 22.5" stroke="#15305a" stroke-width="0.7"/><path d="M0.2999999999999998 10.74L3.5 12.5V15.86L0.2999999999999998 14.1Z" fill="#3f6fb0" stroke="#15305a" stroke-width="0.7" stroke-linejoin="round"/><path d="M3.5 12.5L6.7 10.74V14.1L3.5 15.86Z" fill="#2f5a98" stroke="#15305a" stroke-width="0.7" stroke-linejoin="round"/><path d="M0.2999999999999998 10.74L3.5 8.98L6.7 10.74L3.5 12.5Z" fill="#6a9ad8" stroke="#15305a" stroke-width="0.7" stroke-linejoin="round"/><path d="M7.299999999999999 10.629999999999999L10.7 12.5V16.07L7.299999999999999 14.2Z" fill="#f0d830" stroke="#3a3208" stroke-width="0.7" stroke-linejoin="round"/><path d="M10.7 12.5L14.1 10.629999999999999V14.2L10.7 16.07Z" fill="#d8bc10" stroke="#3a3208" stroke-width="0.7" stroke-linejoin="round"/><path d="M7.299999999999999 10.629999999999999L10.7 8.76L14.1 10.629999999999999L10.7 12.5Z" fill="#fff07a" stroke="#3a3208" stroke-width="0.7" stroke-linejoin="round"/><path d="M14.799999999999999 10.629999999999999L18.2 12.5V16.07L14.799999999999999 14.2Z" fill="#f0d830" stroke="#3a3208" stroke-width="0.7" stroke-linejoin="round"/><path d="M18.2 12.5L21.599999999999998 10.629999999999999V14.2L18.2 16.07Z" fill="#d8bc10" stroke="#3a3208" stroke-width="0.7" stroke-linejoin="round"/><path d="M14.799999999999999 10.629999999999999L18.2 8.76L21.599999999999998 10.629999999999999L18.2 12.5Z" fill="#fff07a" stroke="#3a3208" stroke-width="0.7" stroke-linejoin="round"/></g>
<g transform="translate(730,128)"><defs><linearGradient id="bw" x1="0" y1="0" x2="0" y2="1"><stop offset="0" stop-color="#8ab4e8"/><stop offset="1" stop-color="#3f6fb0"/></linearGradient></defs><path d="M0.1 22.7L21.7 22.7L21.7 4.1L16 2.1L0.1 12.2Z" fill="url(#bw)" stroke="#15305a" stroke-width="1" stroke-linejoin="round"/><path d="M2.5999999999999996 13.74L5.8 15.5V18.86L2.5999999999999996 17.099999999999998Z" fill="#3f6fb0" stroke="#15305a" stroke-width="0.7" stroke-linejoin="round"/><path d="M5.8 15.5L9.0 13.74V17.099999999999998L5.8 18.86Z" fill="#2f5a98" stroke="#15305a" stroke-width="0.7" stroke-linejoin="round"/><path d="M2.5999999999999996 13.74L5.8 11.98L9.0 13.74L5.8 15.5Z" fill="#6a9ad8" stroke="#15305a" stroke-width="0.7" stroke-linejoin="round"/><path d="M2.5999999999999996 8.24L5.8 10V13.36L2.5999999999999996 11.6Z" fill="#f0d830" stroke="#3a3208" stroke-width="0.7" stroke-linejoin="round"/><path d="M5.8 10L9.0 8.24V11.6L5.8 13.36Z" fill="#d8bc10" stroke="#3a3208" stroke-width="0.7" stroke-linejoin="round"/><path d="M2.5999999999999996 8.24L5.8 6.4799999999999995L9.0 8.24L5.8 10Z" fill="#fff07a" stroke="#3a3208" stroke-width="0.7" stroke-linejoin="round"/><path d="M8.399999999999999 4.24L11.6 6V9.36L8.399999999999999 7.6Z" fill="#f0d830" stroke="#3a3208" stroke-width="0.7" stroke-linejoin="round"/><path d="M11.6 6L14.8 4.24V7.6L11.6 9.36Z" fill="#d8bc10" stroke="#3a3208" stroke-width="0.7" stroke-linejoin="round"/><path d="M8.399999999999999 4.24L11.6 2.4799999999999995L14.8 4.24L11.6 6Z" fill="#fff07a" stroke="#3a3208" stroke-width="0.7" stroke-linejoin="round"/><path d="M14.5 7.040000000000001L17.7 8.8V12.16L14.5 10.4Z" fill="#f0d830" stroke="#3a3208" stroke-width="0.7" stroke-linejoin="round"/><path d="M17.7 8.8L20.9 7.040000000000001V10.4L17.7 12.16Z" fill="#d8bc10" stroke="#3a3208" stroke-width="0.7" stroke-linejoin="round"/><path d="M14.5 7.040000000000001L17.7 5.28L20.9 7.040000000000001L17.7 8.8Z" fill="#fff07a" stroke="#3a3208" stroke-width="0.7" stroke-linejoin="round"/><path d="M15.2 12.44L18.4 14.2V17.56L15.2 15.799999999999999Z" fill="#f0d830" stroke="#3a3208" stroke-width="0.7" stroke-linejoin="round"/><path d="M18.4 14.2L21.599999999999998 12.44V15.799999999999999L18.4 17.56Z" fill="#d8bc10" stroke="#3a3208" stroke-width="0.7" stroke-linejoin="round"/><path d="M15.2 12.44L18.4 10.68L21.599999999999998 12.44L18.4 14.2Z" fill="#fff07a" stroke="#3a3208" stroke-width="0.7" stroke-linejoin="round"/><path d="M9.399999999999999 15.44L12.6 17.2V20.56L9.399999999999999 18.799999999999997Z" fill="#f0d830" stroke="#3a3208" stroke-width="0.7" stroke-linejoin="round"/><path d="M12.6 17.2L15.8 15.44V18.799999999999997L12.6 20.56Z" fill="#d8bc10" stroke="#3a3208" stroke-width="0.7" stroke-linejoin="round"/><path d="M9.399999999999999 15.44L12.6 13.68L15.8 15.44L12.6 17.2Z" fill="#fff07a" stroke="#3a3208" stroke-width="0.7" stroke-linejoin="round"/></g>
<g transform="translate(762,128)"><defs><linearGradient id="bw" x1="0" y1="0" x2="0" y2="1"><stop offset="0" stop-color="#8ab4e8"/><stop offset="1" stop-color="#3f6fb0"/></linearGradient></defs><path d="M0.2 22.7L21.9 22.7L21.9 3.4L0.2 12.2Z" fill="url(#bw)" stroke="#15305a" stroke-width="1" stroke-linejoin="round"/><path d="M4.5 14.74L7.7 16.5V19.86L4.5 18.099999999999998Z" fill="#3f6fb0" stroke="#15305a" stroke-width="0.7" stroke-linejoin="round"/><path d="M7.7 16.5L10.9 14.74V18.099999999999998L7.7 19.86Z" fill="#2f5a98" stroke="#15305a" stroke-width="0.7" stroke-linejoin="round"/><path d="M4.5 14.74L7.7 12.98L10.9 14.74L7.7 16.5Z" fill="#6a9ad8" stroke="#15305a" stroke-width="0.7" stroke-linejoin="round"/><path d="M2.3 4.074999999999999L5.8 6V9.675L2.3 7.75Z" fill="#f0d830" stroke="#3a3208" stroke-width="0.7" stroke-linejoin="round"/><path d="M5.8 6L9.3 4.074999999999999V7.75L5.8 9.675Z" fill="#d8bc10" stroke="#3a3208" stroke-width="0.7" stroke-linejoin="round"/><path d="M2.3 4.074999999999999L5.8 2.1499999999999995L9.3 4.074999999999999L5.8 6Z" fill="#fff07a" stroke="#3a3208" stroke-width="0.7" stroke-linejoin="round"/><path d="M8.8 5.09L15 8.5V15.010000000000002L8.8 11.600000000000001Z" fill="#f0d830" stroke="#3a3208" stroke-width="0.7" stroke-linejoin="round"/><path d="M15 8.5L21.2 5.09V11.600000000000001L15 15.010000000000002Z" fill="#d8bc10" stroke="#3a3208" stroke-width="0.7" stroke-linejoin="round"/><path d="M8.8 5.09L15 1.6799999999999988L21.2 5.09L15 8.5Z" fill="#fff07a" stroke="#3a3208" stroke-width="0.7" stroke-linejoin="round"/><path d="M13.2 14.3L17.2 16.5V20.7L13.2 18.5Z" fill="#f0d830" stroke="#3a3208" stroke-width="0.7" stroke-linejoin="round"/><path d="M17.2 16.5L21.2 14.3V18.5L17.2 20.7Z" fill="#d8bc10" stroke="#3a3208" stroke-width="0.7" stroke-linejoin="round"/><path d="M13.2 14.3L17.2 12.1L21.2 14.3L17.2 16.5Z" fill="#fff07a" stroke="#3a3208" stroke-width="0.7" stroke-linejoin="round"/></g>
</svg>
<div style="position:absolute;left:243px;top:50px;width:151px;height:25px;background:linear-gradient(#fdfdfd,#f1f1f1);border:1px solid #adadad;border-radius:3px;box-sizing:border-box"></div>
<svg style="position:absolute;left:249px;top:55px" width="15" height="16"><path d="M0.5 5.5l4-2.3v-1.2l3.3-1.5 6 3.2v7.6l-6 3.7-7.3-3.5z" fill="#4f82c4" stroke="#1e3c6e" stroke-width="0.9"/><path d="M0.5 5.5l7.3 3.5 6-3.5M7.8 9v7.5M4.5 3.2l3.3 1.8v4" stroke="#1e3c6e" stroke-width="0.8" fill="none"/></svg>
<div class="t" style="left:269px;top:57.86px;font-size:10.8px;color:#000;font-weight:normal;">Part Design</div>
<svg style="position:absolute;left:375px;top:61px" width="9" height="5"><path d="M0 0h8l-4 4z" fill="#8c8c8c"/></svg>
<svg style="position:absolute;left:0;top:0" width="364" height="480">
<rect x="0" y="273" width="140" height="18" fill="#4ba4fd"/><rect x="0" y="273" width="140" height="1" fill="#5a9ad8"/><rect x="0" y="290" width="140" height="1" fill="#5a9ad8"/>
<path d="M5.5 207.5h9l-4.5 5z" fill="#000"/>
<g transform="translate(25,202)"><path d="M0.5 0.5h8.5l3 3v12.5h-11.5z" fill="#fafafa" stroke="#888" stroke-width="0.8"/><path d="M2.5 8l3-1.5 3 1.5v4l-3 1.5-3-1.5z" fill="#3a6ab0"/><circle cx="8" cy="6.5" r="2.5" fill="#d02828"/></g>
<path d="M25.5 225.5h9l-4.5 5z" fill="#000"/>
<g transform="translate(44.5,222)"><path d="M0.8 6c2-2.6 4-3.6 5.7-3.6s3.7 1 5.7 3.6c-2 2.6-4 3.6-5.7 3.6s-3.7-1-5.7-3.6z" fill="none" stroke="#000" stroke-width="1.4"/><circle cx="6.5" cy="6" r="2" fill="#000"/></g>
<g transform="translate(66,220)"><path d="M0.5 5.5l4-2.3v-1l3.3-1.7 6.2 3.2v7.6l-6 3.7-7.5-3.5z" fill="#4f82c4" stroke="#1e3c6e" stroke-width="0.9"/><path d="M0.5 5.5l7.5 3.5 6-3.5M8 9v7.5M4.5 3.2l3.3 1.8v4" stroke="#1e3c6e" stroke-width="0.8" fill="none"/></g><circle cx="76.3" cy="225.2" r="5.0" fill="#3a6fb8" stroke="#1d3e70" stroke-width="0.6"/><path d="M74.1 225.29999999999998l1.6 1.7 3-3.2" fill="none" stroke="#fff" stroke-width="1.5"/>
<path d="M47.5 242v8l5-4z" fill="#000"/>
<g transform="translate(64.5,240)"><path d="M0.8 6c2-3 4-4.2 5.7-4.2s3.7 1.2 5.7 4.2c-2 3-4 4.2-5.7 4.2s-3.7-1.2-5.7-4.2z" fill="none" stroke="#6a6a6a" stroke-width="1.1"/><circle cx="6.5" cy="6" r="1.7" fill="none" stroke="#6a6a6a" stroke-width="1"/><path d="M2 0.5l9.5 11" stroke="#6a6a6a" stroke-width="1.1"/></g>
<g transform="translate(86,238)"><path d="M7 1.5v8M7 9.5h7M7 9.5l-5 5" stroke="#8a8a8a" stroke-width="2" stroke-linecap="round" fill="none"/></g>
<path d="M47.5 260v8l5-4z" fill="#000"/>
<g transform="translate(64.5,258)"><path d="M0.8 6c2-3 4-4.2 5.7-4.2s3.7 1.2 5.7 4.2c-2 3-4 4.2-5.7 4.2s-3.7-1.2-5.7-4.2z" fill="none" stroke="#6a6a6a" stroke-width="1.1"/><circle cx="6.5" cy="6" r="1.7" fill="none" stroke="#6a6a6a" stroke-width="1"/><path d="M2 0.5l9.5 11" stroke="#6a6a6a" stroke-width="1.1"/></g>
<g transform="translate(86,256)"><path d="M1 12l6-3 7 3-6 3z" fill="none" stroke="#777" stroke-width="1.6"/><path d="M1.5 5l6-3 6 3v4l-6 3-6-3z" fill="#d4d4d4" stroke="#777" stroke-width="0.7"/></g><circle cx="96.3" cy="261.2" r="5.0" fill="#3a6fb8" stroke="#1d3e70" stroke-width="0.6"/><path d="M94.1 261.3l1.6 1.7 3-3.2" fill="none" stroke="#fff" stroke-width="1.5"/>
<path d="M45.5 279.5h9l-4.5 5z" fill="#000"/>
<g transform="translate(64.5,276)"><path d="M0.8 6c2-3 4-4.2 5.7-4.2s3.7 1.2 5.7 4.2c-2 3-4 4.2-5.7 4.2s-3.7-1.2-5.7-4.2z" fill="none" stroke="#3a6a9a" stroke-width="1.1"/><circle cx="6.5" cy="6" r="1.7" fill="none" stroke="#3a6a9a" stroke-width="1"/><path d="M2 0.5l9.5 11" stroke="#3a6a9a" stroke-width="1.1"/></g>
<g transform="translate(86,274)"><path d="M0.5 1l9 2v13l-9-2z" fill="#9aa4b0" stroke="#777" stroke-width="0.6"/><path d="M9.5 3l5-1v13l-5 1z" fill="#8090a0"/><ellipse cx="5" cy="8.5" rx="3" ry="4" fill="#b8c0c8"/></g><circle cx="96.3" cy="279.2" r="5.0" fill="#3a6fb8" stroke="#1d3e70" stroke-width="0.6"/><path d="M94.1 279.3l1.6 1.7 3-3.2" fill="none" stroke="#fff" stroke-width="1.5"/>
<g transform="translate(84.5,294)"><path d="M0.8 6c2-3 4-4.2 5.7-4.2s3.7 1.2 5.7 4.2c-2 3-4 4.2-5.7 4.2s-3.7-1.2-5.7-4.2z" fill="none" stroke="#6a6a6a" stroke-width="1.1"/><circle cx="6.5" cy="6" r="1.7" fill="none" stroke="#6a6a6a" stroke-width="1"/><path d="M2 0.5l9.5 11" stroke="#6a6a6a" stroke-width="1.1"/></g>
<g transform="translate(106,292)"><path d="M1 7h9v8h-9z" fill="none" stroke="#777" stroke-width="1.4"/></g><circle cx="116.3" cy="297.2" r="5.0" fill="#3a6fb8" stroke="#1d3e70" stroke-width="0.6"/><path d="M114.1 297.3l1.6 1.7 3-3.2" fill="none" stroke="#fff" stroke-width="1.5"/>
<g transform="translate(64.5,312)"><path d="M0.8 6c2-3 4-4.2 5.7-4.2s3.7 1.2 5.7 4.2c-2 3-4 4.2-5.7 4.2s-3.7-1.2-5.7-4.2z" fill="none" stroke="#6a6a6a" stroke-width="1.1"/><circle cx="6.5" cy="6" r="1.7" fill="none" stroke="#6a6a6a" stroke-width="1"/><path d="M2 0.5l9.5 11" stroke="#6a6a6a" stroke-width="1.1"/></g>
<g transform="translate(86,310)"><path d="M0.3 9.5c0-4.5 3.5-7 6.5-7.5l8.5 2v8l-7.5 4.5-7.5-2.5z" fill="#8a8a8a" stroke="#6a6a6a" stroke-width="0.6"/><path d="M0.3 11.5l7.5 2.5 7.5-3.5M7.8 14v2.5" stroke="#b4b4b4" stroke-width="0.8" fill="none"/></g><circle cx="96.3" cy="315.2" r="5.0" fill="#3a6fb8" stroke="#1d3e70" stroke-width="0.6"/><path d="M94.1 315.3l1.6 1.7 3-3.2" fill="none" stroke="#fff" stroke-width="1.5"/>
<g transform="translate(64.5,330)"><path d="M0.8 6c2-3 4-4.2 5.7-4.2s3.7 1.2 5.7 4.2c-2 3-4 4.2-5.7 4.2s-3.7-1.2-5.7-4.2z" fill="none" stroke="#6a6a6a" stroke-width="1.1"/><circle cx="6.5" cy="6" r="1.7" fill="none" stroke="#6a6a6a" stroke-width="1"/><path d="M2 0.5l9.5 11" stroke="#6a6a6a" stroke-width="1.1"/></g>
<g transform="translate(86,328)"><path d="M0.3 9.5c0-4.5 3.5-7 6.5-7.5l8.5 2v8l-7.5 4.5-7.5-2.5z" fill="#8a8a8a" stroke="#6a6a6a" stroke-width="0.6"/><path d="M0.3 11.5l7.5 2.5 7.5-3.5M7.8 14v2.5" stroke="#b4b4b4" stroke-width="0.8" fill="none"/></g><circle cx="96.3" cy="333.2" r="5.0" fill="#3a6fb8" stroke="#1d3e70" stroke-width="0.6"/><path d="M94.1 333.3l1.6 1.7 3-3.2" fill="none" stroke="#fff" stroke-width="1.5"/>
<path d="M47.5 350v8l5-4z" fill="#000"/>
<g transform="translate(64.5,348)"><path d="M0.8 6c2-3 4-4.2 5.7-4.2s3.7 1.2 5.7 4.2c-2 3-4 4.2-5.7 4.2s-3.7-1.2-5.7-4.2z" fill="none" stroke="#6a6a6a" stroke-width="1.1"/><circle cx="6.5" cy="6" r="1.7" fill="none" stroke="#6a6a6a" stroke-width="1"/><path d="M2 0.5l9.5 11" stroke="#6a6a6a" stroke-width="1.1"/></g>
<g transform="translate(86,346)"><path d="M0.3 9.5c0-4.5 3.5-7 6.5-7.5l8.5 2v8l-7.5 4.5-7.5-2.5z" fill="#8a8a8a" stroke="#6a6a6a" stroke-width="0.6"/><path d="M0.3 11.5l7.5 2.5 7.5-3.5M7.8 14v2.5" stroke="#b4b4b4" stroke-width="0.8" fill="none"/></g><circle cx="96.3" cy="351.2" r="5.0" fill="#3a6fb8" stroke="#1d3e70" stroke-width="0.6"/><path d="M94.1 351.3l1.6 1.7 3-3.2" fill="none" stroke="#fff" stroke-width="1.5"/>
<g transform="translate(64.5,366)"><path d="M0.8 6c2-3 4-4.2 5.7-4.2s3.7 1.2 5.7 4.2c-2 3-4 4.2-5.7 4.2s-3.7-1.2-5.7-4.2z" fill="none" stroke="#6a6a6a" stroke-width="1.1"/><circle cx="6.5" cy="6" r="1.7" fill="none" stroke="#6a6a6a" stroke-width="1"/><path d="M2 0.5l9.5 11" stroke="#6a6a6a" stroke-width="1.1"/></g>
<g transform="translate(86,364)"><path d="M0.3 9.5c0-4.5 3.5-7 6.5-7.5l8.5 2v8l-7.5 4.5-7.5-2.5z" fill="#8a8a8a" stroke="#6a6a6a" stroke-width="0.6"/><path d="M0.3 11.5l7.5 2.5 7.5-3.5M7.8 14v2.5" stroke="#b4b4b4" stroke-width="0.8" fill="none"/></g><circle cx="96.3" cy="369.2" r="5.0" fill="#3a6fb8" stroke="#1d3e70" stroke-width="0.6"/><path d="M94.1 369.3l1.6 1.7 3-3.2" fill="none" stroke="#fff" stroke-width="1.5"/>
<g transform="translate(64.5,384)"><path d="M0.8 6c2-3 4-4.2 5.7-4.2s3.7 1.2 5.7 4.2c-2 3-4 4.2-5.7 4.2s-3.7-1.2-5.7-4.2z" fill="none" stroke="#6a6a6a" stroke-width="1.1"/><circle cx="6.5" cy="6" r="1.7" fill="none" stroke="#6a6a6a" stroke-width="1"/><path d="M2 0.5l9.5 11" stroke="#6a6a6a" stroke-width="1.1"/></g>
<g transform="translate(86,382)"><path d="M0.3 9.5c0-4.5 3.5-7 6.5-7.5l8.5 2v8l-7.5 4.5-7.5-2.5z" fill="#8a8a8a" stroke="#6a6a6a" stroke-width="0.6"/><path d="M0.3 11.5l7.5 2.5 7.5-3.5M7.8 14v2.5" stroke="#b4b4b4" stroke-width="0.8" fill="none"/></g><circle cx="96.3" cy="387.2" r="5.0" fill="#3a6fb8" stroke="#1d3e70" stroke-width="0.6"/><path d="M94.1 387.3l1.6 1.7 3-3.2" fill="none" stroke="#fff" stroke-width="1.5"/>
<g transform="translate(64.5,402)"><path d="M0.8 6c2-3 4-4.2 5.7-4.2s3.7 1.2 5.7 4.2c-2 3-4 4.2-5.7 4.2s-3.7-1.2-5.7-4.2z" fill="none" stroke="#6a6a6a" stroke-width="1.1"/><circle cx="6.5" cy="6" r="1.7" fill="none" stroke="#6a6a6a" stroke-width="1"/><path d="M2 0.5l9.5 11" stroke="#6a6a6a" stroke-width="1.1"/></g>
<g transform="translate(86,400)"><path d="M0.3 9.5c0-4.5 3.5-7 6.5-7.5l8.5 2v8l-7.5 4.5-7.5-2.5z" fill="#8a8a8a" stroke="#6a6a6a" stroke-width="0.6"/><path d="M0.3 11.5l7.5 2.5 7.5-3.5M7.8 14v2.5" stroke="#b4b4b4" stroke-width="0.8" fill="none"/></g><circle cx="96.3" cy="405.2" r="5.0" fill="#3a6fb8" stroke="#1d3e70" stroke-width="0.6"/><path d="M94.1 405.3l1.6 1.7 3-3.2" fill="none" stroke="#fff" stroke-width="1.5"/>
<path d="M47.5 422v8l5-4z" fill="#000"/>
<g transform="translate(64.5,420)"><path d="M0.8 6c2-3 4-4.2 5.7-4.2s3.7 1.2 5.7 4.2c-2 3-4 4.2-5.7 4.2s-3.7-1.2-5.7-4.2z" fill="none" stroke="#6a6a6a" stroke-width="1.1"/><circle cx="6.5" cy="6" r="1.7" fill="none" stroke="#6a6a6a" stroke-width="1"/><path d="M2 0.5l9.5 11" stroke="#6a6a6a" stroke-width="1.1"/></g>
<g transform="translate(86,418)"><path d="M0.5 1l9 2v13l-9-2z" fill="#9aa4b0" stroke="#777" stroke-width="0.6"/><path d="M9.5 3l5-1v13l-5 1z" fill="#8090a0"/><ellipse cx="5" cy="8.5" rx="3" ry="4" fill="#b8c0c8"/></g><circle cx="96.3" cy="423.2" r="5.0" fill="#3a6fb8" stroke="#1d3e70" stroke-width="0.6"/><path d="M94.1 423.3l1.6 1.7 3-3.2" fill="none" stroke="#fff" stroke-width="1.5"/>
<g transform="translate(64.5,438)"><path d="M0.8 6c2-3 4-4.2 5.7-4.2s3.7 1.2 5.7 4.2c-2 3-4 4.2-5.7 4.2s-3.7-1.2-5.7-4.2z" fill="none" stroke="#6a6a6a" stroke-width="1.1"/><circle cx="6.5" cy="6" r="1.7" fill="none" stroke="#6a6a6a" stroke-width="1"/><path d="M2 0.5l9.5 11" stroke="#6a6a6a" stroke-width="1.1"/></g>
<g transform="translate(86,436)"><path d="M0.3 9.5c0-4.5 3.5-7 6.5-7.5l8.5 2v8l-7.5 4.5-7.5-2.5z" fill="#8a8a8a" stroke="#6a6a6a" stroke-width="0.6"/><path d="M0.3 11.5l7.5 2.5 7.5-3.5M7.8 14v2.5" stroke="#b4b4b4" stroke-width="0.8" fill="none"/></g><circle cx="96.3" cy="441.2" r="5.0" fill="#3a6fb8" stroke="#1d3e70" stroke-width="0.6"/><path d="M94.1 441.3l1.6 1.7 3-3.2" fill="none" stroke="#fff" stroke-width="1.5"/>
<g transform="translate(64.5,456)"><path d="M0.8 6c2-2.6 4-3.6 5.7-3.6s3.7 1 5.7 3.6c-2 2.6-4 3.6-5.7 3.6s-3.7-1-5.7-3.6z" fill="none" stroke="#000" stroke-width="1.4"/><circle cx="6.5" cy="6" r="2" fill="#000"/></g>
<g transform="translate(86,454)"><path d="M0.5 9c0-4 3-6 6-7l8 2v7l-7 4-7-2.5z" fill="#4f82c4" stroke="#1e3c6e" stroke-width="0.6"/><path d="M0.5 10c0-4 2-6 5-7l3 1c-2 2-3 4-3 8z" fill="#d02828"/></g><circle cx="96" cy="458.8" r="4.2" fill="#3a6fb8" stroke="#1d3e70" stroke-width="0.6"/><path d="M93.8 458.90000000000003l1.6 1.7 3-3.2" fill="none" stroke="#fff" stroke-width="1.5"/><circle cx="96" cy="466.4" r="4.4" fill="#5ac43a"/><path d="M96 463v5M93.8 466l2.2 2.6 2.2-2.6" stroke="#fff" stroke-width="1.4" fill="none"/>
</svg>
<div class="t" style="left:45px;top:205.18px;font-size:11.6px;color:#000;font-weight:bold;">SuportFinestra V4</div>
<div class="t" style="left:87px;top:223.43px;font-size:11.3px;color:#000;font-weight:normal;">Body</div>
<div class="t" style="left:107px;top:241.43px;font-size:11.3px;color:#7c7c7c;font-weight:normal;">Origin</div>
<div class="t" style="left:107px;top:259.43px;font-size:11.3px;color:#7c7c7c;font-weight:normal;">Pad</div>
<div class="t" style="left:107px;top:277.43px;font-size:11.3px;color:#00006a;font-weight:normal;">Hole</div>
<div class="t" style="left:127px;top:295.43px;font-size:11.3px;color:#7c7c7c;font-weight:normal;">Sketch001</div>
<div class="t" style="left:107px;top:313.43px;font-size:11.3px;color:#7c7c7c;font-weight:normal;">Fillet</div>
<div class="t" style="left:107px;top:331.43px;font-size:11.3px;color:#7c7c7c;font-weight:normal;">Fillet001</div>
<div class="t" style="left:107px;top:349.43px;font-size:11.3px;color:#7c7c7c;font-weight:normal;">Pocket</div>
<div class="t" style="left:107px;top:367.43px;font-size:11.3px;color:#7c7c7c;font-weight:normal;">Fillet002</div>
<div class="t" style="left:107px;top:385.43px;font-size:11.3px;color:#7c7c7c;font-weight:normal;">Fillet003</div>
<div class="t" style="left:107px;top:403.43px;font-size:11.3px;color:#7c7c7c;font-weight:normal;">Fillet004</div>
<div class="t" style="left:107px;top:421.43px;font-size:11.3px;color:#7c7c7c;font-weight:normal;">Hole001</div>
<div class="t" style="left:107px;top:439.43px;font-size:11.3px;color:#7c7c7c;font-weight:normal;">Fillet005</div>
<div class="t" style="left:107px;top:457.43px;font-size:11.3px;color:#000;font-weight:normal;">Fillet006</div>
<svg style="position:absolute;left:306px;top:187px" width="52" height="14"><path d="M2.5 2.5h9v9h-9zM2.5 5.5h9" fill="none" stroke="#6e6e6e" stroke-width="1.4"/><path d="M21.5 6.5h6v5h-6zM24.5 6.5v-3h5v5h-2" fill="none" stroke="#6e6e6e" stroke-width="1.4"/><path d="M41 3l8 8M49 3l-8 8" stroke="#3c3c3c" stroke-width="1.8"/></svg>
<div style="position:absolute;left:0px;top:582px;width:342px;height:400px;background:#f0f0f0;border-top:1px solid #c8c8c8;box-sizing:border-box"></div>
<div style="position:absolute;left:0px;top:582px;width:342px;height:20px;background:#ebebeb"></div>
<div style="position:absolute;left:0px;top:601px;width:342px;height:1px;background:#a8a8a8"></div>
<div class="t" style="left:4px;top:587.52px;font-size:11.2px;color:#000;font-weight:bold;">Base</div>
<div style="position:absolute;left:21px;top:621px;width:321px;height:1px;background:#a8a8a8"></div>
<div style="position:absolute;left:100px;top:602px;width:1px;height:20px;background:#a8a8a8"></div>
<div class="t" style="left:24px;top:607.18px;font-size:11.6px;color:#000;font-weight:normal;">Label</div>
<div class="t" style="left:104px;top:607.18px;font-size:11.6px;color:#000;font-weight:normal;">Hole</div>
<div style="position:absolute;left:21px;top:641px;width:321px;height:1px;background:#a8a8a8"></div>
<div style="position:absolute;left:100px;top:622px;width:1px;height:20px;background:#a8a8a8"></div>
<div class="t" style="left:24px;top:627.18px;font-size:11.6px;color:#000;font-weight:normal;">Suppressed</div>
<div class="t" style="left:104px;top:627.18px;font-size:11.6px;color:#000;font-weight:normal;">false</div>
<div style="position:absolute;left:0px;top:642px;width:342px;height:20px;background:#ebebeb"></div>
<div style="position:absolute;left:0px;top:661px;width:342px;height:1px;background:#a8a8a8"></div>
<div class="t" style="left:4px;top:647.52px;font-size:11.2px;color:#000;font-weight:bold;">Hole</div>
<div style="position:absolute;left:21px;top:681px;width:321px;height:1px;background:#a8a8a8"></div>
<div style="position:absolute;left:100px;top:662px;width:1px;height:20px;background:#a8a8a8"></div>
<div class="t" style="left:24px;top:667.18px;font-size:11.6px;color:#000;font-weight:normal;">Threaded</div>
<div class="t" style="left:104px;top:667.18px;font-size:11.6px;color:#000;font-weight:normal;">false</div>
<div style="position:absolute;left:21px;top:701px;width:321px;height:1px;background:#a8a8a8"></div>
<div style="position:absolute;left:100px;top:682px;width:1px;height:20px;background:#a8a8a8"></div>
<div class="t" style="left:24px;top:687.18px;font-size:11.6px;color:#000;font-weight:normal;">Model Thread</div>
<div class="t" style="left:104px;top:687.18px;font-size:11.6px;color:#000;font-weight:normal;">false</div>
<div style="position:absolute;left:21px;top:721px;width:321px;height:1px;background:#a8a8a8"></div>
<div style="position:absolute;left:100px;top:702px;width:1px;height:20px;background:#a8a8a8"></div>
<div class="t" style="left:24px;top:707.18px;font-size:11.6px;color:#000;font-weight:normal;">Thread Type</div>
<div class="t" style="left:104px;top:707.18px;font-size:11.6px;color:#000;font-weight:normal;">None</div>
<div style="position:absolute;left:21px;top:741px;width:321px;height:1px;background:#a8a8a8"></div>
<div style="position:absolute;left:100px;top:722px;width:1px;height:20px;background:#a8a8a8"></div>
<div class="t" style="left:24px;top:727.18px;font-size:11.6px;color:#000;font-weight:normal;">Thread Size</div>
<div class="t" style="left:104px;top:727.18px;font-size:11.6px;color:#000;font-weight:normal;">None</div>
<div style="position:absolute;left:21px;top:761px;width:321px;height:1px;background:#a8a8a8"></div>
<div style="position:absolute;left:100px;top:742px;width:1px;height:20px;background:#a8a8a8"></div>
<div class="t" style="left:24px;top:747.18px;font-size:11.6px;color:#000;font-weight:normal;">Thread Class</div>
<div class="t" style="left:104px;top:747.18px;font-size:11.6px;color:#000;font-weight:normal;">None</div>
<div style="position:absolute;left:21px;top:781px;width:321px;height:1px;background:#a8a8a8"></div>
<div style="position:absolute;left:100px;top:762px;width:1px;height:20px;background:#a8a8a8"></div>
<div class="t" style="left:24px;top:767.18px;font-size:11.6px;color:#000;font-weight:normal;">Thread Fit</div>
<div class="t" style="left:104px;top:767.18px;font-size:11.6px;color:#000;font-weight:normal;">Close</div>
<div style="position:absolute;left:21px;top:801px;width:321px;height:1px;background:#a8a8a8"></div>
<div style="position:absolute;left:100px;top:782px;width:1px;height:20px;background:#a8a8a8"></div>
<div class="t" style="left:24px;top:787.18px;font-size:11.6px;color:#000;font-weight:normal;">Diameter</div>
<div class="t" style="left:104px;top:787.18px;font-size:11.6px;color:#000;font-weight:normal;">8,50 mm</div>
<div style="position:absolute;left:21px;top:821px;width:321px;height:1px;background:#a8a8a8"></div>
<div style="position:absolute;left:100px;top:802px;width:1px;height:20px;background:#a8a8a8"></div>
<div class="t" style="left:24px;top:807.18px;font-size:11.6px;color:#000;font-weight:normal;">Thread Dire...</div>
<div class="t" style="left:104px;top:807.18px;font-size:11.6px;color:#000;font-weight:normal;">Right</div>
<div style="position:absolute;left:21px;top:841px;width:321px;height:1px;background:#a8a8a8"></div>
<div style="position:absolute;left:100px;top:822px;width:1px;height:20px;background:#a8a8a8"></div>
<div class="t" style="left:24px;top:827.18px;font-size:11.6px;color:#000;font-weight:normal;">Hole Cut Ty...</div>
<div class="t" style="left:104px;top:827.18px;font-size:11.6px;color:#000;font-weight:normal;">None</div>
<div style="position:absolute;left:21px;top:861px;width:321px;height:1px;background:#a8a8a8"></div>
<div style="position:absolute;left:100px;top:842px;width:1px;height:20px;background:#a8a8a8"></div>
<div class="t" style="left:24px;top:847.18px;font-size:11.6px;color:#000;font-weight:normal;">Hole Cut C...</div>
<div class="t" style="left:104px;top:847.18px;font-size:11.6px;color:#000;font-weight:normal;">false</div>
<div style="position:absolute;left:21px;top:881px;width:321px;height:1px;background:#a8a8a8"></div>
<div style="position:absolute;left:100px;top:862px;width:1px;height:20px;background:#a8a8a8"></div>
<div class="t" style="left:24px;top:867.18px;font-size:11.6px;color:#000;font-weight:normal;">Hole Cut Di...</div>
<div class="t" style="left:104px;top:867.18px;font-size:11.6px;color:#000;font-weight:normal;">0,00 mm</div>
<div style="position:absolute;left:21px;top:901px;width:321px;height:1px;background:#a8a8a8"></div>
<div style="position:absolute;left:100px;top:882px;width:1px;height:20px;background:#a8a8a8"></div>
<div class="t" style="left:24px;top:887.18px;font-size:11.6px;color:#000;font-weight:normal;">Hole Cut De...</div>
<div class="t" style="left:104px;top:887.18px;font-size:11.6px;color:#000;font-weight:normal;">0,00 mm</div>
<div style="position:absolute;left:21px;top:921px;width:321px;height:1px;background:#a8a8a8"></div>
<div style="position:absolute;left:100px;top:902px;width:1px;height:20px;background:#a8a8a8"></div>
<div class="t" style="left:24px;top:907.18px;font-size:11.6px;color:#000;font-weight:normal;">Hole Cut C...</div>
<div class="t" style="left:104px;top:907.18px;font-size:11.6px;color:#000;font-weight:normal;">90,00 °</div>
<div style="position:absolute;left:21px;top:941px;width:321px;height:1px;background:#a8a8a8"></div>
<div style="position:absolute;left:100px;top:922px;width:1px;height:20px;background:#a8a8a8"></div>
<div class="t" style="left:24px;top:927.18px;font-size:11.6px;color:#000;font-weight:normal;">Depth Type</div>
<div class="t" style="left:104px;top:927.18px;font-size:11.6px;color:#000;font-weight:normal;">ThroughAll</div>
<div style="position:absolute;left:21px;top:961px;width:321px;height:1px;background:#a8a8a8"></div>
<div style="position:absolute;left:100px;top:942px;width:1px;height:20px;background:#a8a8a8"></div>
<div class="t" style="left:24px;top:947.18px;font-size:11.6px;color:#000;font-weight:normal;">Depth</div>
<div class="t" style="left:104px;top:947.18px;font-size:11.6px;color:#000;font-weight:normal;">305,61 mm</div>
<div style="position:absolute;left:21px;top:981px;width:321px;height:1px;background:#a8a8a8"></div>
<div style="position:absolute;left:100px;top:962px;width:1px;height:20px;background:#a8a8a8"></div>
<div class="t" style="left:24px;top:967.18px;font-size:11.6px;color:#000;font-weight:normal;">Drill Point</div>
<div class="t" style="left:104px;top:967.18px;font-size:11.6px;color:#000;font-weight:normal;">Angled</div>
<div style="position:absolute;left:342px;top:582px;width:15px;height:400px;background:#e6e6e6;border:1px solid #acacac;box-sizing:border-box"></div>
<div style="position:absolute;left:343px;top:583px;width:13px;height:13px;background:#fafafa;border-bottom:1px solid #c8c8c8"></div>
<div style="position:absolute;left:343px;top:596px;width:13px;height:201px;background:linear-gradient(90deg,#fcfcfc,#f2f2f2);border-bottom:1px solid #c8c8c8"></div>
<div style="position:absolute;left:343px;top:967px;width:13px;height:14px;background:#fafafa;border-top:1px solid #d0d0d0"></div>
<svg style="position:absolute;left:343px;top:583px" width="14" height="400"><path d="M5.5 9.5h3l-1.5-1.5z" fill="#777"/><path d="M5.5 391h3l-1.5 1.5z" fill="#777"/></svg>
<div style="position:absolute;left:0px;top:582px;width:342px;height:1px;background:#d0d0d0"></div>
<div style="position:absolute;left:0px;top:983px;width:33px;height:23px;background:linear-gradient(#e4e4e4,#d4d4d4);border:1px solid #c0c0c0;border-top:none;border-radius:0 0 3px 3px;box-sizing:border-box"></div>
<div style="position:absolute;left:33px;top:983px;width:38px;height:26px;background:linear-gradient(#f8f8f8,#ffffff);border:1px solid #c8c8c8;border-top:none;border-radius:0 0 3px 3px;box-sizing:border-box"></div>
<div class="t" style="left:4px;top:989.69px;font-size:11px;color:#808080;font-weight:normal;">Vista</div>
<div class="t" style="left:37px;top:991.69px;font-size:11px;color:#000;font-weight:normal;">Datos</div>
<div style="position:absolute;left:364px;top:976px;width:91px;height:30px;background:linear-gradient(#e8e8e8,#d8d8d8);border:1px solid #c0c0c0;border-bottom:none;border-radius:3px 3px 0 0;box-sizing:border-box"></div>
<div style="position:absolute;left:455px;top:976px;width:168px;height:33px;background:linear-gradient(#fdfdfd,#f7f7f7);border:1px solid #c8c8c8;border-bottom:1px solid #c8c8c8;border-radius:0 0 3px 3px;box-sizing:border-box"></div>
<div class="t" style="left:394px;top:986.69px;font-size:11px;color:#606060;font-weight:normal;">Inicio</div>
<div class="t" style="left:485px;top:988.52px;font-size:11.2px;color:#000;font-weight:normal;">SuportFinestra V4 : 1</div>
<svg style="position:absolute;left:430px;top:984px" width="20" height="20"><path d="M4.5 4.5l12 12M16.5 4.5l-12 12" stroke="#6e6e6e" stroke-width="2.6"/></svg>
<svg style="position:absolute;left:598px;top:984px" width="20" height="20"><path d="M4.5 4.5l12 12M16.5 4.5l-12 12" stroke="#6e6e6e" stroke-width="2.6"/></svg>
<div class="t" style="left:2px;top:1019.86px;font-size:10.8px;color:#000;font-weight:normal;">Preselected: SuportFinestra_V4.Body.Fillet006.Edge2 (-60.00 mm, -14.00 mm, 18.60 mm)</div>
<div style="position:absolute;left:1587px;top:1012px;width:90px;height:25px;background:linear-gradient(#fdfdfd,#f0f0f0);border:1px solid #b8b8b8;border-radius:2px;box-sizing:border-box"></div>
<div style="position:absolute;left:1589px;top:1018px;width:14px;height:13px;background:linear-gradient(#5b8fd0,#2f63a8)"></div>
<div style="position:absolute;left:1683px;top:1012px;width:90px;height:25px;background:linear-gradient(#fdfdfd,#f0f0f0);border:1px solid #b8b8b8;border-radius:2px;box-sizing:border-box"></div>
<div style="position:absolute;left:1779px;top:1012px;width:140px;height:25px;background:linear-gradient(#fdfdfd,#f0f0f0);border:1px solid #b8b8b8;border-radius:2px;box-sizing:border-box"></div>
<div class="t" style="left:1721px;top:1020.69px;font-size:11px;color:#000;font-weight:normal;">CAD</div>
<div class="t" style="left:1784px;top:1020.86px;font-size:10.8px;color:#000;font-weight:normal;">232,90 mm x 122,14 mm</div>
<svg style="position:absolute;left:1660px;top:1018px" width="260" height="14">
<path d="M4 6h8l-4 4z M100 6h8l-4 4z M246 6h8l-4 4z" fill="#555"/>
<rect x="51.5" y="2.5" width="6" height="10" rx="3" fill="none" stroke="#222" stroke-width="1.2"/><path d="M54.5 3v3" stroke="#222" stroke-width="1.2"/>
</svg>
<svg style="position:absolute;left:0;top:0" width="22" height="22"><path d="M3.5 5.5Q3.5 3 6 3H17V6.2H6.3V18.5H3.5Z" fill="#c93543"/><path d="M14 3H17V6.2H14Z" fill="#e85a66"/><path d="M3.5 15H6.3V18.5H3.5Z" fill="#e85a66"/><path d="M8.8 8H14.8L16.3 9.6L15.2 11L16.6 12.6L15 14.2H13.4L14.4 15.8L12.8 17.4L11.2 16.4L9.3 18.6H8.8V13.4H11V11.2H8.8Z" fill="#3d8ad8"/></svg>
<svg style="position:absolute;left:367px;top:979px" width="22" height="22"><path d="M3.5 5.5Q3.5 3 6 3H17V6.2H6.3V18.5H3.5Z" fill="#c93543"/><path d="M14 3H17V6.2H14Z" fill="#e85a66"/><path d="M3.5 15H6.3V18.5H3.5Z" fill="#e85a66"/><path d="M8.8 8H14.8L16.3 9.6L15.2 11L16.6 12.6L15 14.2H13.4L14.4 15.8L12.8 17.4L11.2 16.4L9.3 18.6H8.8V13.4H11V11.2H8.8Z" fill="#3d8ad8"/></svg>
<svg style="position:absolute;left:461px;top:983px" width="14" height="18"><path d="M0.5 0.5h9l3 3v13.5h-12z" fill="#fafafa" stroke="#888" stroke-width="0.9"/><path d="M2 9l3.5-1.8 3.5 1.8v4.5l-3.5 1.8-3.5-1.8z" fill="#2f5f9f"/><circle cx="9" cy="7.5" r="3" fill="#d02828"/></svg>
<svg style="position:absolute;left:0;top:0" width="1920" height="1040" viewBox="0 0 1920 1040">
<defs><linearGradient id="gL" gradientUnits="userSpaceOnUse" x1="787.9" y1="394.0" x2="866.4" y2="258.0"><stop offset="0.000" stop-color="#4a302c"/><stop offset="0.037" stop-color="#4d322e"/><stop offset="0.076" stop-color="#513632"/><stop offset="0.118" stop-color="#553935"/><stop offset="0.163" stop-color="#5a3d39"/><stop offset="0.209" stop-color="#5d403c"/><stop offset="0.257" stop-color="#60433e"/><stop offset="0.307" stop-color="#634540"/><stop offset="0.357" stop-color="#644641"/><stop offset="0.407" stop-color="#654642"/><stop offset="0.458" stop-color="#644641"/><stop offset="0.508" stop-color="#634540"/><stop offset="0.558" stop-color="#60433e"/><stop offset="0.607" stop-color="#5d403c"/><stop offset="0.654" stop-color="#5a3d39"/><stop offset="0.699" stop-color="#553935"/><stop offset="0.743" stop-color="#513632"/><stop offset="0.783" stop-color="#4d322e"/><stop offset="0.821" stop-color="#4a302c"/><stop offset="0.856" stop-color="#462e2a"/><stop offset="0.888" stop-color="#422b28"/><stop offset="0.916" stop-color="#3e2825"/><stop offset="0.941" stop-color="#3a2522"/><stop offset="0.961" stop-color="#362220"/><stop offset="0.977" stop-color="#311f1d"/><stop offset="0.989" stop-color="#2d1c1a"/><stop offset="0.997" stop-color="#281917"/><stop offset="1.000" stop-color="#241614"/></linearGradient><linearGradient id="gR" gradientUnits="userSpaceOnUse" x1="1406.3" y1="751.0" x2="1484.8" y2="615.0"><stop offset="0.000" stop-color="#4a302c"/><stop offset="0.037" stop-color="#4d322e"/><stop offset="0.076" stop-color="#513632"/><stop offset="0.118" stop-color="#553935"/><stop offset="0.163" stop-color="#5a3d39"/><stop offset="0.209" stop-color="#5d403c"/><stop offset="0.257" stop-color="#60433e"/><stop offset="0.307" stop-color="#634540"/><stop offset="0.357" stop-color="#644641"/><stop offset="0.407" stop-color="#654642"/><stop offset="0.458" stop-color="#644641"/><stop offset="0.508" stop-color="#634540"/><stop offset="0.558" stop-color="#60433e"/><stop offset="0.607" stop-color="#5d403c"/><stop offset="0.654" stop-color="#5a3d39"/><stop offset="0.699" stop-color="#553935"/><stop offset="0.743" stop-color="#513632"/><stop offset="0.783" stop-color="#4d322e"/><stop offset="0.821" stop-color="#4a302c"/><stop offset="0.856" stop-color="#462e2a"/><stop offset="0.888" stop-color="#422b28"/><stop offset="0.916" stop-color="#3e2825"/><stop offset="0.941" stop-color="#3a2522"/><stop offset="0.961" stop-color="#362220"/><stop offset="0.977" stop-color="#311f1d"/><stop offset="0.989" stop-color="#2d1c1a"/><stop offset="0.997" stop-color="#281917"/><stop offset="1.000" stop-color="#241614"/></linearGradient><radialGradient id="gHole" cx="0.6" cy="0.45" r="0.66"><stop offset="0" stop-color="#6e4a44"/><stop offset="0.5" stop-color="#63423d"/><stop offset="0.82" stop-color="#4c312d"/><stop offset="1" stop-color="#2c1b19"/></radialGradient><radialGradient id="gCone" cx="0.85" cy="0.3" r="0.8"><stop offset="0" stop-color="#82574f"/><stop offset="0.4" stop-color="#6e4842"/><stop offset="0.75" stop-color="#4a2f2b"/><stop offset="1" stop-color="#2c1b19"/></radialGradient><radialGradient id="gCsk" cx="0.5" cy="0.38" r="0.58"><stop offset="0" stop-color="#7d544d"/><stop offset="0.5" stop-color="#64423c"/><stop offset="0.85" stop-color="#3e2724"/><stop offset="1" stop-color="#2a1a18"/></radialGradient><clipPath id="ck1"><ellipse cx="922" cy="492" rx="33.8" ry="19.6"/></clipPath></defs>
<path d="M920.19,289.04 L918.32,288.13 L916.39,287.34 L914.39,286.68 L912.33,286.14 L910.21,285.72 L908.04,285.44 L905.81,285.28 L903.53,285.24 L901.20,285.33 L898.83,285.55 L896.43,285.90 L893.98,286.37 L891.51,286.96 L889.01,287.68 L886.49,288.53 L883.94,289.49 L881.38,290.58 L878.81,291.78 L876.23,293.10 L873.65,294.54 L871.06,296.09 L868.48,297.75 L865.91,299.51 L863.35,301.38 L860.81,303.36 L858.28,305.43 L855.78,307.59 L853.31,309.85 L850.86,312.20 L848.46,314.64 L846.09,317.15 L843.76,319.74 L841.49,322.41 L839.26,325.15 L837.08,327.95 L834.96,330.81 L832.90,333.73 L830.90,336.70 L828.97,339.72 L827.11,342.78 L825.31,345.88 L823.60,349.01 L821.96,352.17 L820.40,355.36 L818.92,358.56 L817.53,361.78 L816.22,365.01 L815.00,368.24 L813.87,371.46 L812.84,374.69 L811.90,377.90 L811.05,381.09 L810.30,384.27 L809.65,387.42 L809.09,390.54 L808.64,393.62 L808.28,396.66 L808.03,399.66 L807.88,402.61 L807.83,405.50 L755.00,375.00 L755.05,372.11 L755.20,369.16 L755.46,366.16 L755.81,363.12 L756.26,360.04 L756.82,356.92 L757.47,353.77 L758.22,350.59 L759.07,347.40 L760.01,344.19 L761.05,340.96 L762.17,337.74 L763.39,334.51 L764.70,331.28 L766.09,328.06 L767.57,324.86 L769.13,321.67 L770.77,318.51 L772.49,315.38 L774.28,312.28 L776.14,309.22 L778.07,306.20 L780.07,303.23 L782.13,300.31 L784.25,297.45 L786.43,294.65 L788.66,291.91 L790.94,289.24 L793.26,286.65 L795.63,284.14 L798.04,281.70 L800.48,279.35 L802.95,277.09 L805.45,274.93 L807.98,272.86 L810.52,270.88 L813.08,269.01 L815.65,267.25 L818.23,265.59 L820.82,264.04 L823.40,262.60 L825.98,261.28 L828.55,260.08 L831.11,258.99 L833.66,258.03 L836.18,257.18 L838.68,256.46 L841.16,255.87 L843.60,255.40 L846.01,255.05 L848.37,254.83 L850.70,254.74 L852.98,254.78 L855.21,254.94 L857.38,255.22 L859.50,255.64 L861.57,256.18 L863.56,256.84 L865.50,257.63 L867.36,258.54 Z" fill="url(#gL)"/>
<path d="M807.83,502.50 L939.46,426.50 L939.46,329.50 L939.37,325.73 L939.10,322.08 L938.65,318.55 L938.03,315.16 L937.22,311.91 L936.24,308.81 L935.09,305.88 L933.77,303.11 L932.29,300.52 L930.65,298.11 L928.85,295.89 L926.89,293.87 L924.80,292.05 L922.56,290.44 L920.19,289.04 L917.69,287.85 L915.07,286.89 L912.33,286.14 L909.49,285.61 L906.55,285.31 L903.53,285.24 L900.42,285.39 L897.23,285.77 L893.98,286.37 L890.68,287.19 L887.33,288.23 L883.94,289.49 L880.53,290.97 L877.09,292.65 L873.65,294.54 L870.20,296.63 L866.77,298.91 L863.35,301.38 L859.96,304.03 L856.61,306.86 L853.31,309.85 L850.06,313.00 L846.87,316.30 L843.76,319.74 L840.74,323.31 L837.80,327.01 L834.96,330.81 L832.22,334.71 L829.60,338.71 L827.11,342.78 L824.73,346.92 L822.50,351.12 L820.40,355.36 L818.45,359.63 L816.65,363.93 L815.00,368.24 L813.52,372.54 L812.20,376.83 L811.05,381.09 L810.07,385.32 L809.27,389.50 L808.64,393.62 L808.19,397.67 L807.92,401.63 L807.83,405.50 Z" fill="#4c3431"/>
<path d="M755.00,505.00 L1426.60,892.75 L1426.60,762.75 L1373.34,732.00 L1373.34,829.00 L807.83,502.50 L807.83,405.50 L755.00,375.00 Z" fill="#4c3431"/>
<path d="M807.83,502.50 L939.46,426.50 L942.23,431.30 L1503.59,755.40 L1373.34,829.00 Z" fill="#4c3431"/>
<path d="M807.83,497.70 L939.46,421.70 L942.23,431.30 L811.98,504.90 Z" fill="#674540"/>
<path d="M811.98,509.70 L816.14,502.50 L1377.50,826.60 L1373.34,833.80 Z" fill="#674540"/>
<ellipse cx="922" cy="492" rx="33.8" ry="19.6" fill="url(#gCsk)"/>
<ellipse cx="921.7" cy="504" rx="16" ry="9.2" fill="#60403a" clip-path="url(#ck1)" stroke="#141010" stroke-width="1.4"/>
<ellipse cx="922" cy="492" rx="33.8" ry="19.6" fill="none" stroke="#141010" stroke-width="1.6"/>
<ellipse cx="1397" cy="763" rx="33.8" ry="19.6" fill="url(#gCsk)"/>
<ellipse cx="1397" cy="763" rx="33.8" ry="19.6" fill="none" stroke="#141010" stroke-width="1.6"/>
<path d="M807.83,497.70 Q807.83,503.94 811.98,509.70 L816.14,502.50 Z" fill="#674540"/>
<path d="M939.46,329.50 L939.37,325.73 L939.10,322.08 L938.65,318.55 L938.03,315.16 L937.22,311.91 L936.24,308.81 L935.09,305.88 L933.77,303.11 L932.29,300.52 L930.65,298.11 L928.85,295.89 L926.89,293.87 L924.80,292.05 L922.56,290.44 L920.19,289.04 L917.69,287.85 L915.07,286.89 L912.33,286.14 L909.49,285.61 L906.55,285.31 L903.53,285.24 L900.42,285.39 L897.23,285.77 L893.98,286.37 L890.68,287.19 L887.33,288.23 L883.94,289.49 L880.53,290.97 L877.09,292.65 L873.65,294.54 L870.20,296.63 L866.77,298.91 L863.35,301.38 L859.96,304.03 L856.61,306.86 L853.31,309.85 L850.06,313.00 L846.87,316.30 L843.76,319.74 L840.74,323.31 L837.80,327.01 L834.96,330.81 L832.22,334.71 L829.60,338.71 L827.11,342.78 L824.73,346.92 L822.50,351.12 L820.40,355.36 L818.45,359.63 L816.65,363.93 L815.00,368.24 L813.52,372.54 L812.20,376.83 L811.05,381.09 L810.07,385.32 L809.27,389.50 L808.64,393.62 L808.19,397.67 L807.92,401.63 L807.83,405.50 M867.36,258.54 L865.50,257.63 L863.56,256.84 L861.57,256.18 L859.50,255.64 L857.38,255.22 L855.21,254.94 L852.98,254.78 L850.70,254.74 L848.37,254.83 L846.01,255.05 L843.60,255.40 L841.16,255.87 L838.68,256.46 L836.18,257.18 L833.66,258.03 L831.11,258.99 L828.55,260.08 L825.98,261.28 L823.40,262.60 L820.82,264.04 L818.23,265.59 L815.65,267.25 L813.08,269.01 L810.52,270.88 L807.98,272.86 L805.45,274.93 L802.95,277.09 L800.48,279.35 L798.04,281.70 L795.63,284.14 L793.26,286.65 L790.94,289.24 L788.66,291.91 L786.43,294.65 L784.25,297.45 L782.13,300.31 L780.07,303.23 L778.07,306.20 L776.14,309.22 L774.28,312.28 L772.49,315.38 L770.77,318.51 L769.13,321.67 L767.57,324.86 L766.09,328.06 L764.70,331.28 L763.39,334.51 L762.17,337.74 L761.05,340.96 L760.01,344.19 L759.07,347.40 L758.22,350.59 L757.47,353.77 L756.82,356.92 L756.26,360.04 L755.81,363.12 L755.46,366.16 L755.20,369.16 L755.05,372.11 L755.00,375.00 M867.36,258.54 L920.19,289.04 M755.00,375.00 L807.83,405.50 M823.11,262.76 L875.94,293.26 M817.95,265.77 L870.77,296.27 M755.00,505.00 L755.00,375.00 M807.83,405.50 L807.83,497.70 Q807.83,503.94 811.98,509.70 M939.46,421.70 L939.46,329.50 M807.83,497.70 L939.46,421.70 M811.98,504.90 L942.23,431.30 M816.14,502.50 L1377.50,826.60 M811.98,509.70 L1373.34,833.80 M755.00,505.00 L1426.60,892.75 M942.23,431.30 L1503.59,755.40" fill="none" stroke="#141010" stroke-width="1.7" stroke-linejoin="round" stroke-linecap="round"/>
<circle cx="0" cy="0" r="34.5" transform="matrix(0.8660,-0.5,0,-1,874.6,366.1)" fill="url(#gCone)" /><circle cx="0" cy="0" r="21.5" transform="matrix(0.8660,-0.5,0,-1,866.9,361.4)" fill="url(#gHole)" /><circle cx="0" cy="0" r="34.5" transform="matrix(0.8660,-0.5,0,-1,874.6,366.1)" fill="none" stroke="#141010" stroke-width="1.7" vector-effect="non-scaling-stroke"/><circle cx="0" cy="0" r="21.5" transform="matrix(0.8660,-0.5,0,-1,866.9,361.4)" fill="none" stroke="#141010" stroke-width="1.5" vector-effect="non-scaling-stroke"/><path d="M848.9,374.5 L864.9,384.0 L874.8,399.2" fill="none" stroke="#141010" stroke-width="1.4"/>
<path d="M1538.96,646.29 L1537.10,645.38 L1535.17,644.59 L1533.17,643.93 L1531.11,643.39 L1528.99,642.97 L1526.81,642.69 L1524.58,642.53 L1522.30,642.49 L1519.98,642.58 L1517.61,642.80 L1515.20,643.15 L1512.76,643.62 L1510.29,644.21 L1507.79,644.93 L1505.26,645.78 L1502.72,646.74 L1500.16,647.83 L1497.58,649.03 L1495.00,650.35 L1492.42,651.79 L1489.84,653.34 L1487.26,655.00 L1484.68,656.76 L1482.12,658.63 L1479.58,660.61 L1477.06,662.68 L1474.55,664.84 L1472.08,667.10 L1469.64,669.45 L1467.23,671.89 L1464.87,674.40 L1462.54,676.99 L1460.26,679.66 L1458.03,682.40 L1455.85,685.20 L1453.73,688.06 L1451.67,690.98 L1449.68,693.95 L1447.74,696.97 L1445.88,700.03 L1444.09,703.13 L1442.37,706.26 L1440.73,709.42 L1439.17,712.61 L1437.70,715.81 L1436.30,719.03 L1434.99,722.26 L1433.78,725.49 L1432.65,728.71 L1431.61,731.94 L1430.67,735.15 L1429.82,738.34 L1429.07,741.52 L1428.42,744.67 L1427.87,747.79 L1427.41,750.87 L1427.06,753.91 L1426.81,756.91 L1426.65,759.86 L1426.60,762.75 L1373.34,732.00 L1373.39,729.11 L1373.55,726.16 L1373.80,723.16 L1374.15,720.12 L1374.61,717.04 L1375.16,713.92 L1375.81,710.77 L1376.56,707.59 L1377.41,704.40 L1378.35,701.19 L1379.39,697.96 L1380.52,694.74 L1381.73,691.51 L1383.04,688.28 L1384.43,685.06 L1385.91,681.86 L1387.47,678.67 L1389.11,675.51 L1390.83,672.38 L1392.62,669.28 L1394.48,666.22 L1396.41,663.20 L1398.41,660.23 L1400.47,657.31 L1402.59,654.45 L1404.77,651.65 L1407.00,648.91 L1409.28,646.24 L1411.60,643.65 L1413.97,641.14 L1416.38,638.70 L1418.82,636.35 L1421.29,634.09 L1423.80,631.93 L1426.32,629.86 L1428.86,627.88 L1431.42,626.01 L1434.00,624.25 L1436.58,622.59 L1439.16,621.04 L1441.74,619.60 L1444.32,618.28 L1446.90,617.08 L1449.46,615.99 L1452.00,615.03 L1454.52,614.18 L1457.03,613.46 L1459.50,612.87 L1461.94,612.40 L1464.35,612.05 L1466.72,611.83 L1469.04,611.74 L1471.32,611.78 L1473.55,611.94 L1475.73,612.22 L1477.85,612.64 L1479.91,613.18 L1481.91,613.84 L1483.84,614.63 L1485.70,615.54 Z" fill="url(#gR)"/>
<path d="M1373.34,862.00 L1426.60,892.75 L1426.60,762.75 L1373.34,732.00 Z" fill="#4c3431"/>
<path d="M1426.60,892.75 L1426.60,762.75 L1426.69,758.88 L1426.96,754.92 L1427.41,750.87 L1428.04,746.75 L1428.85,742.57 L1429.82,738.34 L1430.97,734.08 L1432.29,729.79 L1433.78,725.49 L1435.42,721.18 L1437.22,716.88 L1439.17,712.61 L1441.27,708.37 L1443.51,704.17 L1445.88,700.03 L1448.38,695.96 L1451.00,691.96 L1453.73,688.06 L1456.57,684.26 L1459.51,680.56 L1462.54,676.99 L1465.65,673.55 L1468.83,670.25 L1472.08,667.10 L1475.39,664.11 L1478.74,661.28 L1482.12,658.63 L1485.54,656.16 L1488.98,653.88 L1492.42,651.79 L1495.87,649.90 L1499.30,648.22 L1502.72,646.74 L1506.10,645.48 L1509.46,644.44 L1512.76,643.62 L1516.01,643.02 L1519.19,642.64 L1522.30,642.49 L1525.33,642.56 L1528.27,642.86 L1531.11,643.39 L1533.84,644.14 L1536.46,645.10 L1538.96,646.29 L1541.33,647.69 L1543.57,649.30 L1545.67,651.12 L1547.62,653.14 L1549.42,655.36 L1551.06,657.77 L1552.55,660.36 L1553.87,663.13 L1555.02,666.06 L1556.00,669.16 L1556.80,672.41 L1557.43,675.80 L1557.88,679.33 L1558.15,682.98 L1558.24,686.75 L1560.19,817.88 L1558.24,691.25 L1558.15,687.71 L1557.90,684.27 L1557.48,680.95 L1556.89,677.76 L1556.13,674.70 L1555.21,671.79 L1554.13,669.03 L1552.89,666.42 L1551.49,663.98 L1549.94,661.72 L1548.25,659.63 L1546.41,657.73 L1544.44,656.02 L1542.33,654.50 L1540.10,653.19 L1537.75,652.07 L1535.29,651.16 L1532.71,650.46 L1530.04,649.96 L1527.28,649.68 L1524.43,649.61 L1521.50,649.75 L1518.51,650.11 L1515.45,650.67 L1512.34,651.45 L1509.19,652.43 L1506.00,653.61 L1502.79,655.00 L1499.56,656.58 L1496.32,658.36 L1493.08,660.33 L1489.85,662.47 L1486.63,664.80 L1483.44,667.29 L1480.29,669.95 L1477.18,672.77 L1474.13,675.73 L1471.13,678.84 L1468.21,682.07 L1465.36,685.43 L1462.59,688.90 L1459.92,692.48 L1457.35,696.15 L1454.88,699.91 L1452.53,703.74 L1450.30,707.64 L1448.20,711.59 L1446.22,715.58 L1444.39,719.60 L1442.69,723.64 L1441.15,727.69 L1439.75,731.74 L1438.51,735.78 L1437.43,739.79 L1436.51,743.77 L1435.75,747.70 L1435.16,751.57 L1434.74,755.38 L1434.48,759.11 L1434.40,762.75 L1434.40,892.75 Z" fill="#674540"/>
<path d="M1434.40,892.75 L1560.19,817.88 L1560.19,687.88 L1558.24,691.25 L1558.15,687.71 L1557.90,684.27 L1557.48,680.95 L1556.89,677.76 L1556.13,674.70 L1555.21,671.79 L1554.13,669.03 L1552.89,666.42 L1551.49,663.98 L1549.94,661.72 L1548.25,659.63 L1546.41,657.73 L1544.44,656.02 L1542.33,654.50 L1540.10,653.19 L1537.75,652.07 L1535.29,651.16 L1532.71,650.46 L1530.04,649.96 L1527.28,649.68 L1524.43,649.61 L1521.50,649.75 L1518.51,650.11 L1515.45,650.67 L1512.34,651.45 L1509.19,652.43 L1506.00,653.61 L1502.79,655.00 L1499.56,656.58 L1496.32,658.36 L1493.08,660.33 L1489.85,662.47 L1486.63,664.80 L1483.44,667.29 L1480.29,669.95 L1477.18,672.77 L1474.13,675.73 L1471.13,678.84 L1468.21,682.07 L1465.36,685.43 L1462.59,688.90 L1459.92,692.48 L1457.35,696.15 L1454.88,699.91 L1452.53,703.74 L1450.30,707.64 L1448.20,711.59 L1446.22,715.58 L1444.39,719.60 L1442.69,723.64 L1441.15,727.69 L1439.75,731.74 L1438.51,735.78 L1437.43,739.79 L1436.51,743.77 L1435.75,747.70 L1435.16,751.57 L1434.74,755.38 L1434.48,759.11 L1434.40,762.75 Z" fill="#4c3431"/>
<path d="M1558.24,686.75 L1558.15,682.98 L1557.88,679.33 L1557.43,675.80 L1556.80,672.41 L1556.00,669.16 L1555.02,666.06 L1553.87,663.13 L1552.55,660.36 L1551.06,657.77 L1549.42,655.36 L1547.62,653.14 L1545.67,651.12 L1543.57,649.30 L1541.33,647.69 L1538.96,646.29 L1536.46,645.10 L1533.84,644.14 L1531.11,643.39 L1528.27,642.86 L1525.33,642.56 L1522.30,642.49 L1519.19,642.64 L1516.01,643.02 L1512.76,643.62 L1509.46,644.44 L1506.10,645.48 L1502.72,646.74 L1499.30,648.22 L1495.87,649.90 L1492.42,651.79 L1488.98,653.88 L1485.54,656.16 L1482.12,658.63 L1478.74,661.28 L1475.39,664.11 L1472.08,667.10 L1468.83,670.25 L1465.65,673.55 L1462.54,676.99 L1459.51,680.56 L1456.57,684.26 L1453.73,688.06 L1451.00,691.96 L1448.38,695.96 L1445.88,700.03 L1443.51,704.17 L1441.27,708.37 L1439.17,712.61 L1437.22,716.88 L1435.42,721.18 L1433.78,725.49 L1432.29,729.79 L1430.97,734.08 L1429.82,738.34 L1428.85,742.57 L1428.04,746.75 L1427.41,750.87 L1426.96,754.92 L1426.69,758.88 L1426.60,762.75 M1558.24,691.25 L1558.15,687.71 L1557.90,684.27 L1557.48,680.95 L1556.89,677.76 L1556.13,674.70 L1555.21,671.79 L1554.13,669.03 L1552.89,666.42 L1551.49,663.98 L1549.94,661.72 L1548.25,659.63 L1546.41,657.73 L1544.44,656.02 L1542.33,654.50 L1540.10,653.19 L1537.75,652.07 L1535.29,651.16 L1532.71,650.46 L1530.04,649.96 L1527.28,649.68 L1524.43,649.61 L1521.50,649.75 L1518.51,650.11 L1515.45,650.67 L1512.34,651.45 L1509.19,652.43 L1506.00,653.61 L1502.79,655.00 L1499.56,656.58 L1496.32,658.36 L1493.08,660.33 L1489.85,662.47 L1486.63,664.80 L1483.44,667.29 L1480.29,669.95 L1477.18,672.77 L1474.13,675.73 L1471.13,678.84 L1468.21,682.07 L1465.36,685.43 L1462.59,688.90 L1459.92,692.48 L1457.35,696.15 L1454.88,699.91 L1452.53,703.74 L1450.30,707.64 L1448.20,711.59 L1446.22,715.58 L1444.39,719.60 L1442.69,723.64 L1441.15,727.69 L1439.75,731.74 L1438.51,735.78 L1437.43,739.79 L1436.51,743.77 L1435.75,747.70 L1435.16,751.57 L1434.74,755.38 L1434.48,759.11 L1434.40,762.75 M1485.70,615.54 L1483.84,614.63 L1481.91,613.84 L1479.91,613.18 L1477.85,612.64 L1475.73,612.22 L1473.55,611.94 L1471.32,611.78 L1469.04,611.74 L1466.72,611.83 L1464.35,612.05 L1461.94,612.40 L1459.50,612.87 L1457.03,613.46 L1454.52,614.18 L1452.00,615.03 L1449.46,615.99 L1446.90,617.08 L1444.32,618.28 L1441.74,619.60 L1439.16,621.04 L1436.58,622.59 L1434.00,624.25 L1431.42,626.01 L1428.86,627.88 L1426.32,629.86 L1423.80,631.93 L1421.29,634.09 L1418.82,636.35 L1416.38,638.70 L1413.97,641.14 L1411.60,643.65 L1409.28,646.24 L1407.00,648.91 L1404.77,651.65 L1402.59,654.45 L1400.47,657.31 L1398.41,660.23 L1396.41,663.20 L1394.48,666.22 L1392.62,669.28 L1390.83,672.38 L1389.11,675.51 L1387.47,678.67 L1385.91,681.86 L1384.43,685.06 L1383.04,688.28 L1381.73,691.51 L1380.52,694.74 L1379.39,697.96 L1378.35,701.19 L1377.41,704.40 L1376.56,707.59 L1375.81,710.77 L1375.16,713.92 L1374.61,717.04 L1374.15,720.12 L1373.80,723.16 L1373.55,726.16 L1373.39,729.11 L1373.34,732.00 M1485.70,615.54 L1538.96,646.29 M1373.34,732.00 L1426.60,762.75 M1441.46,619.76 L1494.72,650.51 M1436.29,622.77 L1489.55,653.52 M1373.34,833.80 L1373.34,732.00 M1426.60,892.75 L1426.60,762.75 M1434.40,892.75 L1434.40,762.75 M1560.19,817.88 L1560.19,689.88 L1558.24,686.75 M1373.34,862.00 L1426.60,892.75 L1434.40,892.75 L1560.19,817.88" fill="none" stroke="#141010" stroke-width="1.7" stroke-linejoin="round" stroke-linecap="round"/>
<circle cx="0" cy="0" r="29.2" transform="matrix(0.8660,-0.5,0,-1,1498.3,726)" fill="url(#gCone)" /><circle cx="0" cy="0" r="22.5" transform="matrix(0.8660,-0.5,0,-1,1493.7,723.5)" fill="url(#gHole)" /><circle cx="0" cy="0" r="29.2" transform="matrix(0.8660,-0.5,0,-1,1498.3,726)" fill="none" stroke="#141010" stroke-width="1.7" vector-effect="non-scaling-stroke"/><circle cx="0" cy="0" r="22.5" transform="matrix(0.8660,-0.5,0,-1,1493.7,723.5)" fill="none" stroke="#141010" stroke-width="1.5" vector-effect="non-scaling-stroke"/><path d="M1474.3,736.7 L1493.3,746.7 L1498.5,753.6" fill="none" stroke="#141010" stroke-width="1.4"/>
</svg>
<svg style="position:absolute;left:1775px;top:160px" width="145" height="145" viewBox="0 0 1040 1040">
<g fill="#e4f0fb" stroke="#5a5a5a" stroke-width="8" stroke-linejoin="round">
<path d="M440 138L522 45L608 138Z"/>
<path d="M440 893L608 893L522 985Z"/>
<path d="M52 515L148 432L148 600Z"/>
<path d="M900 432L995 515L900 600Z"/>
<path d="M392 95C320 110 255 150 205 200L180 185L165 295L275 262L255 245C295 200 345 165 405 145Z"/>
<path d="M655 95C727 110 792 150 842 200L867 185L880 295L772 262L792 245C752 200 702 165 642 145Z"/>
<circle cx="935" cy="103" r="48"/>
<path d="M772 815L845 780L915 805L915 890L845 920L772 890Z"/>
<path d="M772 815L845 838L915 805M845 838L845 920" fill="none"/>
<path d="M490 212L560 212L730 315L800 400L805 630L790 680L590 800L560 820L490 820L455 800L270 690L240 630L240 400L315 315Z"/>
<path d="M320 315L490 215L560 215L728 315L725 355L565 450L485 450L320 355Z"/>
<path d="M485 450L565 450L600 515L560 580L490 580L450 515Z"/>
<path d="M248 440L285 425L450 515L490 580L485 775L455 800L270 690L248 630Z"/>
<path d="M800 440L763 425L600 515L560 580L560 770L590 800L790 690L800 630Z"/>
<path d="M240 400L315 315L320 355L285 425L248 440Z"/>
<path d="M808 400L730 315L725 355L763 425L800 440Z"/>
<path d="M485 580L560 580L560 770L485 775Z"/>
<path d="M455 800L485 775L560 770L590 800L560 820L490 820Z"/>
</g>
<g font-family="Liberation Sans, sans-serif" fill="#8a8a8a" font-size="58">
<text x="0" y="0" transform="translate(428 290) rotate(25) skewX(-15)" font-size="46" font-style="italic">ARRIBA</text>
<text x="0" y="0" transform="translate(260 555) rotate(27)" font-size="50">FRONTAL</text>
<text x="0" y="0" transform="translate(578 680) rotate(-24)" font-size="50">DERECHA</text>
</g>
<path d="M173 425V712" stroke="#5555ee" stroke-width="11"/>
<path d="M173 712L435 568" stroke="#66dd55" stroke-width="11"/>
<path d="M173 712L430 865" stroke="#e05555" stroke-width="11"/>
</svg>
<svg style="position:absolute;left:1860px;top:895px" width="60" height="60">
<path d="M19.3 40.3V20" stroke="#1a1a80" stroke-width="1.6"/><path d="M16.5 22L19.3 13L22 22Z" fill="#1a1a80"/>
<path d="M19.3 40.3L32.5 33.3" stroke="#1a7a1a" stroke-width="1.6"/><path d="M30.2 31L36.2 30.9L32.6 35.8Z" fill="#1a7a1a"/>
<path d="M19.3 40.3L37 50" stroke="#7a1a1a" stroke-width="1.6"/><path d="M32.3 50.6L36.8 45.7L42.6 53.8Z" fill="#7a1a1a"/>
<text x="19.5" y="12" font-family="Liberation Sans, sans-serif" font-size="9.5" font-weight="bold" fill="#000">Z</text>
<text x="36" y="30" font-family="Liberation Sans, sans-serif" font-size="9.5" font-weight="bold" fill="#000">Y</text>
<text x="43" y="53" font-family="Liberation Sans, sans-serif" font-size="9.5" font-weight="bold" fill="#000">X</text>
</svg>
</body></html>
